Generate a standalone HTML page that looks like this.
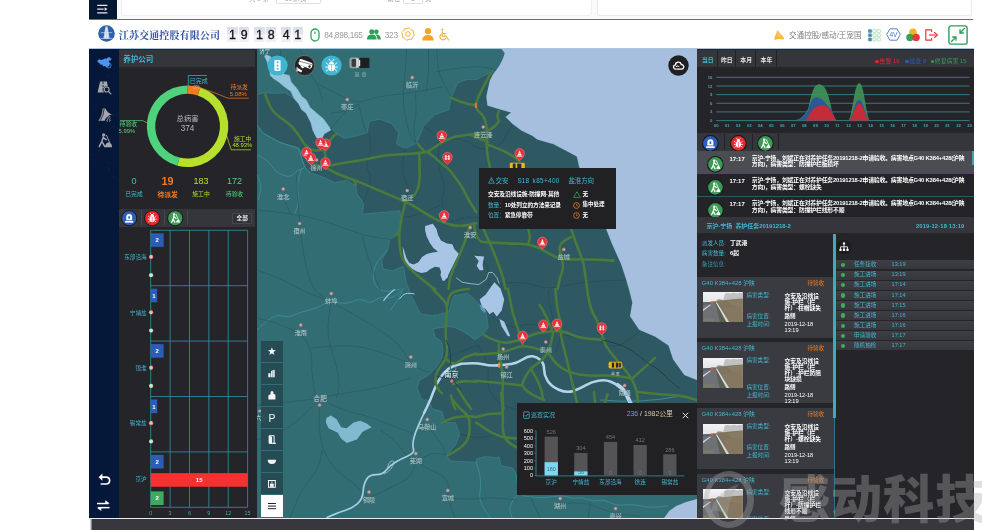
<!DOCTYPE html>
<html lang="zh-CN"><head><meta charset="utf-8"><title>江苏交通控股有限公司</title><style>
*{box-sizing:border-box;margin:0;padding:0}
html,body{width:982px;height:530px;overflow:hidden;background:#fff}
body{position:relative;font-family:"Liberation Sans","Noto Sans CJK SC",sans-serif;color:#fff;-webkit-font-smoothing:antialiased}
#root{position:absolute;left:0;top:0;width:982px;height:530px;overflow:hidden;background:#fff;filter:blur(.42px)}
.a{position:absolute}
.t{position:absolute;white-space:nowrap;line-height:1}
.c{color:#45b6cf}
svg{position:absolute;overflow:visible}
</style></head>
<body><div id="root">
<div class="a" style="left:116px;top:0;width:866px;height:19px;background:#fafafa"></div>
<div class="a" style="left:121px;top:-3px;width:471px;height:19px;background:#fff;border:1px solid #f0f0f0;border-radius:3px"></div>
<div class="a" style="left:597px;top:-3px;width:375px;height:19px;background:#fff;border:1px solid #e9e9e9;border-radius:3px"></div>
<div class="a" style="left:972px;top:0;width:10px;height:19px;background:#fff"></div>
<div class="a" style="left:276px;top:-10px;width:44.8px;height:13.6px;border:.8px solid #dcdfe6;border-radius:1.6px"></div>
<div class="a" style="left:402.6px;top:-10px;width:20.2px;height:13.6px;border:.8px solid #dcdfe6;border-radius:1.6px"></div>
<div class="t" style="left:249px;top:-4.4px;font-size:6.4px;color:#9a9ca2">共 9 条</div>
<div class="t" style="left:285px;top:-4.4px;font-size:6.4px;color:#9a9ca2">10条/页</div>
<div class="t" style="left:387.6px;top:-4.4px;font-size:6.4px;color:#9a9ca2">前往</div>
<div class="t" style="left:411px;top:-4.4px;font-size:6.4px;color:#9a9ca2">1</div>
<div class="t" style="left:425px;top:-4.4px;font-size:6.4px;color:#9a9ca2">页</div>
<div class="a" style="left:89px;top:0;width:27.6px;height:19.6px;background:#041733"></div>
<svg style="left:96px;top:3px" width="13" height="13" viewBox="0 0 13 13"><g stroke="#e8eaee" stroke-width="1.3" fill="none"><path d="M1.2 2.4H11.4M1.2 6.1H7.6M1.2 9.8H11.4"/></g><path d="M8.6 4.3L11.4 6.1L8.6 7.9Z" fill="#e8eaee"/></svg>
<div class="a" style="left:89px;top:18.7px;width:884px;height:1.1px;background:#6e6e6e"></div>
<svg style="left:98.2px;top:25.4px" width="17" height="17" viewBox="0 0 17 17"><circle cx="8.5" cy="8.5" r="8.3" fill="#2d62ab"/><path d="M7.4 1.6h2.2l2 12.2H5.4z" fill="#c3d4ea"/><path d="M8 3.4h1l.9 10.4H7.1z" fill="#eef3fa"/><path d="M8.5 5V13.8" stroke="#9fb9dc" stroke-width=".5"/><path d="M2.8 7.7H14.2" stroke="#e6eefa" stroke-width=".55"/><path d="M2.6 13.6Q8.5 12.8 14.4 13.6" stroke="#b8cbe6" stroke-width=".7" fill="none"/></svg>
<div class="t" style="left:118.8px;top:30.5px;font-family:'Liberation Serif','Noto Serif CJK SC',serif;font-weight:700;font-size:10px;letter-spacing:.12px;color:#2b4fa0">江苏交通控股有限公司</div>
<div class="a" style="left:227.3px;top:27.4px;width:10.4px;height:14.8px;background:linear-gradient(#d9dde8 0%,#e3e6ee 48%,#f6f6f8 52%,#eeeff3 100%);border-radius:1px;color:#151517;font-family:'Liberation Sans',sans-serif;font-weight:400;-webkit-text-stroke:.32px #151517;font-size:12.4px;line-height:16.3px;text-align:center">1</div>
<div class="a" style="left:239.0px;top:27.4px;width:10.4px;height:14.8px;background:linear-gradient(#d9dde8 0%,#e3e6ee 48%,#f6f6f8 52%,#eeeff3 100%);border-radius:1px;color:#151517;font-family:'Liberation Sans',sans-serif;font-weight:400;-webkit-text-stroke:.32px #151517;font-size:12.4px;line-height:16.3px;text-align:center">9</div>
<div class="a" style="left:254.2px;top:27.4px;width:10.4px;height:14.8px;background:linear-gradient(#d9dde8 0%,#e3e6ee 48%,#f6f6f8 52%,#eeeff3 100%);border-radius:1px;color:#151517;font-family:'Liberation Sans',sans-serif;font-weight:400;-webkit-text-stroke:.32px #151517;font-size:12.4px;line-height:16.3px;text-align:center">1</div>
<div class="a" style="left:265.9px;top:27.4px;width:10.4px;height:14.8px;background:linear-gradient(#d9dde8 0%,#e3e6ee 48%,#f6f6f8 52%,#eeeff3 100%);border-radius:1px;color:#151517;font-family:'Liberation Sans',sans-serif;font-weight:400;-webkit-text-stroke:.32px #151517;font-size:12.4px;line-height:16.3px;text-align:center">8</div>
<div class="a" style="left:281.1px;top:27.4px;width:10.4px;height:14.8px;background:linear-gradient(#d9dde8 0%,#e3e6ee 48%,#f6f6f8 52%,#eeeff3 100%);border-radius:1px;color:#151517;font-family:'Liberation Sans',sans-serif;font-weight:400;-webkit-text-stroke:.32px #151517;font-size:12.4px;line-height:16.3px;text-align:center">4</div>
<div class="a" style="left:292.6px;top:27.4px;width:10.4px;height:14.8px;background:linear-gradient(#d9dde8 0%,#e3e6ee 48%,#f6f6f8 52%,#eeeff3 100%);border-radius:1px;color:#151517;font-family:'Liberation Sans',sans-serif;font-weight:400;-webkit-text-stroke:.32px #151517;font-size:12.4px;line-height:16.3px;text-align:center">1</div>
<svg style="left:310px;top:28px" width="10" height="14" viewBox="0 0 10 14"><rect x="1" y="1" width="8" height="12" rx="4" fill="none" stroke="#2fa45c" stroke-width="1.3"/><path d="M5 3.4V6" stroke="#2fa45c" stroke-width="1.2"/></svg>
<div class="t" style="left:324.3px;top:30.6px;font-size:8.3px;letter-spacing:-.32px;color:#9c9c9c">84,898,165</div>
<svg style="left:366.5px;top:29px" width="14" height="11" viewBox="0 0 14 11"><g fill="#2c9f58"><circle cx="4.8" cy="2.8" r="2.5"/><path d="M0 10.4Q0 5.6 4.8 5.6Q9.6 5.6 9.6 10.4Z"/><circle cx="9.4" cy="2.8" r="2.3"/><path d="M8.2 5.3Q13.8 5.3 13.8 10.4H10.6Q10.4 6.8 8.2 5.3Z"/></g></svg>
<div class="t" style="left:384.8px;top:30.6px;font-size:8.3px;letter-spacing:-.3px;color:#9c9c9c">323</div>
<svg style="left:401.4px;top:27.3px" width="14" height="14" viewBox="0 0 14 14"><polygon points="13.28,8.25 11.49,10.00 10.56,12.32 8.05,12.30 5.75,13.28 4.00,11.49 1.68,10.56 1.70,8.05 0.72,5.75 2.51,4.00 3.44,1.68 5.95,1.70 8.25,0.72 10.00,2.51 12.32,3.44 12.30,5.95" fill="none" stroke="#f4b040" stroke-width="1" stroke-linejoin="round"/><circle cx="7" cy="7" r="2.3" fill="none" stroke="#f4b040" stroke-width="1"/></svg>
<svg style="left:421.6px;top:27.6px" width="12" height="13" viewBox="0 0 12 13"><g fill="#f3a621"><circle cx="6" cy="3.2" r="3.1"/><path d="M0.2 12.6Q0.2 7 6 7Q11.8 7 11.8 12.6Z"/></g></svg>
<svg style="left:439px;top:27.6px" width="11" height="13" viewBox="0 0 11 13"><g fill="none" stroke="#f4b040" stroke-width="1.2" stroke-linecap="round" stroke-linejoin="round"><circle cx="3.4" cy="1.6" r="1.1" fill="#f4b040" stroke="none"/><path d="M3.2 3.6V8.2H7.2L9.6 12"/><path d="M3.4 5.6H6.6"/><path d="M1.6 6.6Q0.6 8 1 9.6Q2 12.2 4.8 11.8Q6 11.4 6.6 10.4"/></g></svg>
<svg style="left:773.8px;top:29.6px" width="11" height="10.4" viewBox="0 0 11 10.4"><path d="M3.5 .3L10 7.8Q10.3 9.7 8.8 9.6Q5.2 8.2 .8 9.9Q-.1 8.8 .5 7.6Z" fill="#f6b93c"/><path d="M3.9 2.2L7.4 6.4M2.9 4.4L5.6 7.4" stroke="#fbe2a4" stroke-width=".6"/></svg>
<div class="t" style="left:789px;top:31.5px;font-size:7.6px;color:#808080;letter-spacing:0">交通控股/感动/王宠国</div>
<svg style="left:868px;top:28.6px" width="13" height="13" viewBox="0 0 13 13"><rect x="0.4" y="0.6" width="3.2" height="3" rx=".6" fill="#4a8fbb" stroke="#4a8fbb" stroke-width=".6"/><rect x="4.8" y="0.6" width="3.2" height="3" rx=".6" fill="none" stroke="#8fd09a" stroke-width=".6"/><rect x="9.2" y="0.6" width="3.2" height="3" rx=".6" fill="none" stroke="#8fd09a" stroke-width=".6"/><rect x="0.4" y="4.8" width="3.2" height="3" rx=".6" fill="#4a8fbb" stroke="#4a8fbb" stroke-width=".6"/><rect x="4.8" y="4.8" width="3.2" height="3" rx=".6" fill="none" stroke="#8fd09a" stroke-width=".6"/><rect x="9.2" y="4.8" width="3.2" height="3" rx=".6" fill="none" stroke="#8fd09a" stroke-width=".6"/><rect x="0.4" y="9.0" width="3.2" height="3" rx=".6" fill="#4a8fbb" stroke="#4a8fbb" stroke-width=".6"/><rect x="4.8" y="9.0" width="3.2" height="3" rx=".6" fill="none" stroke="#8fd09a" stroke-width=".6"/><rect x="9.2" y="9.0" width="3.2" height="3" rx=".6" fill="none" stroke="#8fd09a" stroke-width=".6"/></svg>
<svg style="left:886px;top:28.2px" width="15" height="13" viewBox="0 0 15 13"><polygon points="0.7,6.5 4,0.8 11,0.8 14.3,6.5 11,12.2 4,12.2" fill="#fff" stroke="#4a78bb" stroke-width=".9"/><text x="7.5" y="9" font-size="6.6" font-weight="400" text-anchor="middle" fill="#4a78bb" font-family="Liberation Sans,sans-serif">4V</text></svg>
<svg style="left:906px;top:27.6px" width="14" height="14" viewBox="0 0 14 14"><circle cx="7" cy="4.2" r="3.7" fill="#f5b324"/><circle cx="3.9" cy="9.4" r="3.7" fill="#34a356"/><circle cx="10.1" cy="9.4" r="3.7" fill="#e2393d"/></svg>
<svg style="left:924.6px;top:28.8px" width="13" height="12" viewBox="0 0 13 12"><g fill="none" stroke="#e0383c" stroke-width="1.2" stroke-linejoin="round"><path d="M6.6 3V0.8H0.8V11.2H6.6V9"/><path d="M4 6H10.6"/></g><path d="M9.2 3.2L12.4 6L9.2 8.8" fill="none" stroke="#e0383c" stroke-width="1.2"/></svg>
<svg style="left:948.4px;top:25px" width="20" height="20" viewBox="0 0 20 20"><rect x="0.9" y="0.9" width="18.2" height="18.2" rx="2.2" fill="#fff" stroke="#2c9f58" stroke-width="1.4"/><g stroke="#2c9f58" stroke-width="1.3" fill="none"><path d="M17 3L12.2 7.8M12 4.2V8H15.8"/><path d="M3 17L7.8 12.2M8 15.8V12H4.2"/></g></svg>
<div class="a" style="left:118.5px;top:48.6px;width:136.5px;height:469.6px;background:#252529"></div>
<div class="a" style="left:118.5px;top:50.4px;width:136.5px;height:16.2px;background:#34363c"></div>
<div class="t" style="left:123.2px;top:56.2px;font-size:7.5px;font-weight:700;color:#45b6cf">养护公司</div>
<svg style="left:0;top:0" width="982" height="530" viewBox="0 0 982 530"><path d="M187.60 85.40A40.80 40.80 0 0 1 200.40 87.46L197.77 95.44A32.40 32.40 0 0 0 187.60 93.80Z" fill="#f47a20"/><path d="M200.40 87.46A40.80 40.80 0 0 1 177.43 165.71L179.52 157.58A32.40 32.40 0 0 0 197.77 95.44Z" fill="#b7e02d"/><path d="M177.43 165.71A40.80 40.80 0 0 1 187.60 85.40L187.60 93.80A32.40 32.40 0 0 0 179.52 157.58Z" fill="#4ed37c"/><path d="M188.3 86.4V75.5H207" fill="none" stroke="#45b6cf" stroke-width=".7"/><path d="M199.6 87.6L214 92.6L228 98.2H248.8" fill="none" stroke="#f47a20" stroke-width=".7"/><path d="M226.8 136L231.2 149.8H251" fill="none" stroke="#b7e02d" stroke-width=".7"/><path d="M147.4 123L142.6 120.6H120" fill="none" stroke="#4ed37c" stroke-width=".7"/></svg>
<div class="t" style="left:189.8px;top:77.8px;font-size:6px;color:#45b6cf">已完成</div>
<div class="t" style="left:193.2px;top:85.6px;font-size:4.8px;color:#e8b890">0%</div>
<div class="t" style="left:230.4px;top:84.6px;font-size:5.8px;color:#f47a20">待派发</div>
<div class="t" style="left:229.8px;top:91.4px;font-size:6px;color:#f47a20">5.08%</div>
<div class="t" style="left:234px;top:136.6px;font-size:5.8px;color:#b7e02d">施工中</div>
<div class="t" style="left:232.4px;top:143.4px;font-size:5.8px;color:#b7e02d">48.93%</div>
<div class="t" style="left:119.6px;top:121.5px;font-size:5.8px;color:#4ed37c">待验收</div>
<div class="t" style="left:115.4px;top:128.9px;font-size:5.8px;color:#4ed37c">45.99%</div>
<div class="t" style="left:167.6px;top:114.6px;width:40px;text-align:center;font-size:7.4px;color:#b9b9bb">总病害</div>
<div class="t" style="left:167.6px;top:124.6px;width:40px;text-align:center;font-size:8.2px;color:#b9b9bb">374</div>
<div class="t" style="left:114.0px;top:176.9px;width:40px;text-align:center;font-size:9.0px;font-weight:400;color:#45b6cf">0</div>
<div class="t" style="left:114.0px;top:191.6px;width:40px;text-align:center;font-size:5.8px;font-weight:400;color:#45b6cf">已完成</div>
<div class="t" style="left:147.6px;top:176.0px;width:40px;text-align:center;font-size:10.8px;font-weight:700;color:#f47a20">19</div>
<div class="t" style="left:147.6px;top:192.4px;width:40px;text-align:center;font-size:6.8px;font-weight:700;color:#f47a20">待派发</div>
<div class="t" style="left:181.0px;top:176.9px;width:40px;text-align:center;font-size:9.0px;font-weight:400;color:#b7e02d">183</div>
<div class="t" style="left:181.0px;top:191.6px;width:40px;text-align:center;font-size:5.8px;font-weight:400;color:#b7e02d">施工中</div>
<div class="t" style="left:214.4px;top:176.9px;width:40px;text-align:center;font-size:9.0px;font-weight:400;color:#4ed37c">172</div>
<div class="t" style="left:214.4px;top:191.6px;width:40px;text-align:center;font-size:5.8px;font-weight:400;color:#4ed37c">待验收</div>
<div class="a" style="left:118.5px;top:209px;width:136.5px;height:17.6px;background:#34363c"></div>
<div class="a" style="left:141.2px;top:210.4px;width:1px;height:15px;background:#46484e"></div>
<div class="a" style="left:164.2px;top:210.4px;width:1px;height:15px;background:#46484e"></div>
<div class="a" style="left:187.2px;top:210.4px;width:1px;height:15px;background:#46484e"></div>
<svg style="left:120.7px;top:210.4px" width="16.4" height="16.4" viewBox="-10 -10 20 20"><circle r="9.3" fill="#2c5fb8" stroke="#141618" stroke-width="1.2"/><path d="M-3.6 2.6V-1.2Q-3.6 -5 0 -5Q3.6 -5 3.6 -1.2V2.6Z" fill="#fff"/><rect x="-5" y="3.4" width="10" height="2" fill="#fff"/><rect x="-1" y="-2.4" width="2" height="3" fill="#2c5fb8"/></svg>
<svg style="left:143.8px;top:210.4px" width="16.4" height="16.4" viewBox="-10 -10 20 20"><circle r="9.3" fill="#e8262d" stroke="#141618" stroke-width="1.2"/><ellipse cx="0" cy="1" rx="3.1" ry="4" fill="#fff"/><circle cx="0" cy="-3.6" r="1.9" fill="#fff"/><g stroke="#fff" stroke-width="1" fill="none"><path d="M-3 -1L-5 -2.6M-3.2 1.2H-5.4M-3 3.2L-4.8 4.8M3 -1L5 -2.6M3.2 1.2H5.4M3 3.2L4.8 4.8M-1.4 -5L-2.4 -6.2M1.4 -5L2.4 -6.2"/></g><path d="M0 -1.8V4.6" stroke="#e8262d" stroke-width=".7"/></svg>
<svg style="left:166.7px;top:210.4px" width="16.4" height="16.4" viewBox="-10 -10 20 20"><circle r="9.3" fill="#3c9a55" stroke="#141618" stroke-width="1.2"/><circle cx="-1.4" cy="-4.4" r="1.5" fill="#fff"/><g stroke="#fff" stroke-width="1.5" fill="none" stroke-linecap="round" stroke-linejoin="round"><path d="M-1.6 -2.4L-2.6 1.2L-4.4 5M-2.6 1.2L-0.4 5M-1.6 -2L1 0.2"/><path d="M1.2 -4.4L4.6 3.6" stroke-width="1"/></g><path d="M1 5.4Q1.4 1.6 4 1.8Q6 2.4 5.8 5.4Z" fill="#fff"/></svg>
<div class="a" style="left:232px;top:213.4px;width:20.4px;height:10.4px;background:#303238;border:.6px solid #45474d"></div>
<div class="t" style="left:232px;top:215.6px;width:20.4px;text-align:center;font-size:5.6px;font-weight:700;color:#eee">全部</div>
<svg style="left:0;top:0" width="982" height="530" viewBox="0 0 982 530"><path d="M150.70 230.30V507.30" stroke="#2f94a4" stroke-width=".8"/><path d="M170.08 230.30V507.30" stroke="#2f94a4" stroke-width=".8"/><path d="M189.46 230.30V507.30" stroke="#2f94a4" stroke-width=".8"/><path d="M208.84 230.30V507.30" stroke="#2f94a4" stroke-width=".8"/><path d="M228.22 230.30V507.30" stroke="#2f94a4" stroke-width=".8"/><path d="M247.60 230.30V507.30" stroke="#2f94a4" stroke-width=".8"/><path d="M150.70 230.30H247.60" stroke="#2f94a4" stroke-width=".8"/><path d="M150.70 285.70H247.60" stroke="#2f94a4" stroke-width=".8"/><path d="M150.70 341.10H247.60" stroke="#2f94a4" stroke-width=".8"/><path d="M150.70 396.50H247.60" stroke="#2f94a4" stroke-width=".8"/><path d="M150.70 451.90H247.60" stroke="#2f94a4" stroke-width=".8"/><path d="M150.70 507.30H247.60" stroke="#2f94a4" stroke-width=".8"/><rect x="150.70" y="233.30" width="12.92" height="13.6" fill="#2c5db6"/><text x="157.16" y="242.30" font-size="6" font-weight="700" fill="#fff" text-anchor="middle" font-family="Liberation Sans,sans-serif">2</text><circle cx="151.10" cy="256.95" r="2.15" fill="#e98a8a"/><text x="151.10" y="258.25" font-size="3.6" fill="#fff" text-anchor="middle" font-family="Liberation Sans,sans-serif">0</text><circle cx="151.10" cy="275.20" r="2.15" fill="#a8d8b8"/><text x="151.10" y="276.50" font-size="3.6" fill="#fff" text-anchor="middle" font-family="Liberation Sans,sans-serif">0</text><rect x="150.70" y="288.70" width="6.46" height="13.6" fill="#2c5db6"/><text x="153.93" y="297.70" font-size="6" font-weight="700" fill="#fff" text-anchor="middle" font-family="Liberation Sans,sans-serif">1</text><circle cx="151.10" cy="312.35" r="2.15" fill="#e98a8a"/><text x="151.10" y="313.65" font-size="3.6" fill="#fff" text-anchor="middle" font-family="Liberation Sans,sans-serif">0</text><circle cx="151.10" cy="330.60" r="2.15" fill="#a8d8b8"/><text x="151.10" y="331.90" font-size="3.6" fill="#fff" text-anchor="middle" font-family="Liberation Sans,sans-serif">0</text><rect x="150.70" y="344.10" width="12.92" height="13.6" fill="#2c5db6"/><text x="157.16" y="353.10" font-size="6" font-weight="700" fill="#fff" text-anchor="middle" font-family="Liberation Sans,sans-serif">2</text><circle cx="151.10" cy="367.75" r="2.15" fill="#e98a8a"/><text x="151.10" y="369.05" font-size="3.6" fill="#fff" text-anchor="middle" font-family="Liberation Sans,sans-serif">0</text><circle cx="151.10" cy="386.00" r="2.15" fill="#a8d8b8"/><text x="151.10" y="387.30" font-size="3.6" fill="#fff" text-anchor="middle" font-family="Liberation Sans,sans-serif">0</text><rect x="150.70" y="399.50" width="6.46" height="13.6" fill="#2c5db6"/><text x="153.93" y="408.50" font-size="6" font-weight="700" fill="#fff" text-anchor="middle" font-family="Liberation Sans,sans-serif">1</text><circle cx="151.10" cy="423.15" r="2.15" fill="#e98a8a"/><text x="151.10" y="424.45" font-size="3.6" fill="#fff" text-anchor="middle" font-family="Liberation Sans,sans-serif">0</text><circle cx="151.10" cy="441.40" r="2.15" fill="#a8d8b8"/><text x="151.10" y="442.70" font-size="3.6" fill="#fff" text-anchor="middle" font-family="Liberation Sans,sans-serif">0</text><rect x="150.70" y="454.90" width="12.92" height="13.6" fill="#2c5db6"/><text x="157.16" y="463.90" font-size="6" font-weight="700" fill="#fff" text-anchor="middle" font-family="Liberation Sans,sans-serif">2</text><rect x="150.70" y="473.15" width="96.90" height="13.6" fill="#f8302f"/><text x="199.15" y="482.15" font-size="6" font-weight="700" fill="#fff" text-anchor="middle" font-family="Liberation Sans,sans-serif">15</text><rect x="150.70" y="491.40" width="12.92" height="13.6" fill="#3fa95f"/><text x="157.16" y="500.40" font-size="6" font-weight="700" fill="#fff" text-anchor="middle" font-family="Liberation Sans,sans-serif">2</text><text x="150.70" y="515.4" font-size="5.4" fill="#3ea7bb" text-anchor="middle" font-family="Liberation Sans,sans-serif">0</text><text x="170.08" y="515.4" font-size="5.4" fill="#3ea7bb" text-anchor="middle" font-family="Liberation Sans,sans-serif">3</text><text x="189.46" y="515.4" font-size="5.4" fill="#3ea7bb" text-anchor="middle" font-family="Liberation Sans,sans-serif">6</text><text x="208.84" y="515.4" font-size="5.4" fill="#3ea7bb" text-anchor="middle" font-family="Liberation Sans,sans-serif">9</text><text x="228.22" y="515.4" font-size="5.4" fill="#3ea7bb" text-anchor="middle" font-family="Liberation Sans,sans-serif">12</text><text x="247.60" y="515.4" font-size="5.4" fill="#3ea7bb" text-anchor="middle" font-family="Liberation Sans,sans-serif">15</text></svg>
<div class="t" style="left:108px;top:255.3px;width:38.6px;text-align:right;font-size:5.6px;color:#45b6cf">东部沿海</div>
<div class="t" style="left:108px;top:310.6px;width:38.6px;text-align:right;font-size:5.6px;color:#45b6cf">宁靖盐</div>
<div class="t" style="left:108px;top:366.1px;width:38.6px;text-align:right;font-size:5.6px;color:#45b6cf">锦淮</div>
<div class="t" style="left:108px;top:421.4px;width:38.6px;text-align:right;font-size:5.6px;color:#45b6cf">锡常盐</div>
<div class="t" style="left:108px;top:476.8px;width:38.6px;text-align:right;font-size:5.6px;color:#45b6cf">京沪</div>
<div class="a" style="left:89px;top:48.6px;width:29.6px;height:469.6px;background:#06183a"></div>
<svg style="left:89px;top:48.6px" width="30" height="140"><circle cx="8.2" cy="74.4" r=".35" fill="#2a4468"/><circle cx="11.6" cy="81.7" r=".35" fill="#2a4468"/><circle cx="18.3" cy="16.0" r=".35" fill="#2a4468"/><circle cx="2.3" cy="110.2" r=".35" fill="#2a4468"/><circle cx="8.7" cy="36.6" r=".35" fill="#2a4468"/><circle cx="27.9" cy="65.4" r=".35" fill="#2a4468"/><circle cx="23.7" cy="66.1" r=".35" fill="#2a4468"/><circle cx="18.6" cy="26.4" r=".35" fill="#2a4468"/><circle cx="18.5" cy="113.9" r=".35" fill="#2a4468"/><circle cx="15.6" cy="98.4" r=".35" fill="#2a4468"/><circle cx="19.5" cy="15.8" r=".35" fill="#2a4468"/><circle cx="21.7" cy="80.1" r=".35" fill="#2a4468"/><circle cx="9.8" cy="11.8" r=".35" fill="#2a4468"/><circle cx="24.5" cy="65.7" r=".35" fill="#2a4468"/><circle cx="20.7" cy="115.2" r=".35" fill="#2a4468"/><circle cx="20.6" cy="120.4" r=".35" fill="#2a4468"/><circle cx="12.3" cy="105.7" r=".35" fill="#2a4468"/><circle cx="13.6" cy="122.1" r=".35" fill="#2a4468"/><circle cx="24.9" cy="19.9" r=".35" fill="#2a4468"/><circle cx="5.5" cy="34.5" r=".35" fill="#2a4468"/><circle cx="27.1" cy="61.2" r=".35" fill="#2a4468"/><circle cx="18.3" cy="44.7" r=".35" fill="#2a4468"/><circle cx="15.2" cy="55.1" r=".35" fill="#2a4468"/><circle cx="11.1" cy="79.4" r=".35" fill="#2a4468"/><circle cx="17.2" cy="118.3" r=".35" fill="#2a4468"/><circle cx="19.7" cy="121.3" r=".35" fill="#2a4468"/><circle cx="24.3" cy="128.9" r=".35" fill="#2a4468"/><circle cx="19.5" cy="27.9" r=".35" fill="#2a4468"/><circle cx="24.4" cy="125.7" r=".35" fill="#2a4468"/><circle cx="25.5" cy="77.4" r=".35" fill="#2a4468"/><circle cx="20.6" cy="33.8" r=".35" fill="#2a4468"/><circle cx="23.6" cy="78.0" r=".35" fill="#2a4468"/><circle cx="9.4" cy="15.7" r=".35" fill="#2a4468"/><circle cx="24.2" cy="128.8" r=".35" fill="#2a4468"/><circle cx="4.3" cy="105.7" r=".35" fill="#2a4468"/><circle cx="12.7" cy="26.4" r=".35" fill="#2a4468"/><circle cx="9.6" cy="101.8" r=".35" fill="#2a4468"/><circle cx="24.7" cy="13.4" r=".35" fill="#2a4468"/><circle cx="18.0" cy="13.5" r=".35" fill="#2a4468"/><circle cx="20.7" cy="48.4" r=".35" fill="#2a4468"/><circle cx="24.9" cy="127.6" r=".35" fill="#2a4468"/><circle cx="15.1" cy="129.8" r=".35" fill="#2a4468"/><circle cx="10.1" cy="17.4" r=".35" fill="#2a4468"/><circle cx="17.6" cy="11.8" r=".35" fill="#2a4468"/><circle cx="7.1" cy="57.8" r=".35" fill="#2a4468"/><circle cx="17.9" cy="27.1" r=".35" fill="#2a4468"/><circle cx="3.1" cy="113.9" r=".35" fill="#2a4468"/><circle cx="10.2" cy="125.0" r=".35" fill="#2a4468"/><circle cx="25.3" cy="54.1" r=".35" fill="#2a4468"/><circle cx="14.0" cy="71.4" r=".35" fill="#2a4468"/></svg>
<svg style="left:97px;top:57px" width="15" height="11.4" viewBox="0 0 16 12"><path d="M0.4 3.6L2.6 2.2L4 3.2L6.6 2.6L8.2 1.4L10.4 1.8L11.4 0.4L13.6 0.2L14.2 1.6L15.6 1.2L15 3L13 3.8L12.4 5.2L13.8 6.2L13.4 8.4L11.6 10.2L9.6 10.6L8.4 9.6L6.4 9.8L5.8 8.2L3.4 7.8L2.4 6.2L0.8 5.6Z" fill="#4b95ec"/><circle cx="12.4" cy="9" r="2.7" fill="none" stroke="#4b95ec" stroke-width=".8"/><path d="M10.6 8.4H14.2M12.4 6.6V11.4" stroke="#4b95ec" stroke-width=".5"/></svg>
<svg style="left:97.4px;top:81.4px" width="14.6" height="13.6" viewBox="0 0 16 15"><path d="M3.4 0.6H10.8L12 6Q8.2 5 7 8.4Q6.6 10.8 8 12.6H0.6Z" fill="#a3a7ad"/><path d="M6.6 1V12.4" stroke="#051a36" stroke-width="1.1" stroke-dasharray="2.2 1.4"/><circle cx="10.6" cy="9.4" r="2.7" fill="none" stroke="#a3a7ad" stroke-width="1.2"/><path d="M12.6 11.4L15.2 14.2" stroke="#a3a7ad" stroke-width="1.4" stroke-linecap="round"/></svg>
<svg style="left:97.6px;top:108px" width="14.4" height="13.4" viewBox="0 0 16 15"><path d="M0.4 14.2Q4.4 9.6 5.2 0.6H8.2Q11 6 15.4 7.2Q9.4 8 7.4 14.2Z" fill="#a3a7ad"/><path d="M2.6 14Q6 9 6.8 1" stroke="#051a36" stroke-width=".9" fill="none"/><text x="12" y="14.2" font-size="6" fill="#a3a7ad" text-anchor="middle" font-family="Liberation Sans,Noto Sans CJK SC,sans-serif">养</text></svg>
<svg style="left:97.6px;top:133.2px" width="15" height="15" viewBox="0 0 17 17"><circle cx="6.4" cy="2.2" r="1.8" fill="#a3a7ad"/><g stroke="#a3a7ad" stroke-width="1.7" fill="none" stroke-linecap="round" stroke-linejoin="round"><path d="M6 4.6L4.4 9.4L1.4 15.4M4.4 9.4L7.6 15.2M6 5.2L9.2 7.6"/><path d="M9.6 2.6L13.4 11.4" stroke-width="1.1"/></g><path d="M7.8 16.2Q8.4 10.4 12.6 10.8Q16.2 11.8 15.8 16.2Z" fill="#a3a7ad"/></svg>
<svg style="left:97.6px;top:473.4px" width="13" height="13" viewBox="0 0 13 13"><path d="M2.2 4.2H8Q11.6 4.2 11.6 7.6Q11.6 11 8 11H2.6" fill="none" stroke="#fff" stroke-width="1.7"/><path d="M4.4 0.6L0.6 4.2L4.4 7.8Z" fill="#fff"/></svg>
<svg style="left:95.9px;top:500.2px" width="14.6" height="11.2" viewBox="0 0 15 12"><g stroke="#fff" stroke-width="1.6" fill="none"><path d="M0.8 3.8H13"/><path d="M14.2 8.2H2"/></g><path d="M9.6 0.2L14.4 3.8H9.6Z" fill="#fff"/><path d="M5.4 11.8L0.6 8.2H5.4Z" fill="#fff"/></svg>
<svg style="left:256.8px;top:49px;overflow:hidden" width="440.6" height="469.2" viewBox="256.8 49 440.6 469.2"><rect x="256" y="49" width="442" height="469" fill="#326d74"/><polygon points="257.0,125.3 257.0,94.7 265.0,92.4 276.4,93.6 284.3,92.4 292.0,97.0 310.0,115.0 330.7,128.0 336.4,133.9 344.3,138.4 355.6,136.1 366.9,132.7 369.2,121.4 379.4,119.2 391.8,123.7 398.6,132.7 396.3,144.1 405.4,148.6 416.7,142.9 423.5,126.0 434.8,114.6 448.4,110.1 450.7,97.7 457.5,83.0 466.5,79.6 476.0,79.6 489.6,72.8 496.0,71.6 493.0,73.9 489.6,80.7 486.2,96.5 487.3,105.6 498.6,109.0 511.0,112.4 505.4,116.9 512.2,123.7 521.3,130.5 532.6,136.1 537.1,139.5 553.0,144.0 566.5,150.9 576.7,156.5 579.0,166.7 585.0,180.0 592.0,195.0 598.0,210.0 603.0,222.0 606.0,229.0 611.8,243.7 620.9,264.0 625.4,277.6 628.8,289.0 632.2,302.6 629.9,316.2 639.0,329.7 654.8,336.5 668.4,345.6 672.9,359.2 684.2,375.0 697.0,380.0 697.0,482.0 516.7,482.0 516.7,474.7 512.2,467.9 500.9,465.6 498.6,456.6 496.4,457.7 485.0,456.6 476.0,458.8 476.0,462.2 450.7,461.1 446.1,455.5 455.2,445.3 459.7,434.0 455.2,422.6 445.0,422.6 441.6,411.3 432.5,409.0 428.0,400.0 423.0,400.0 420.5,397.6 416.9,387.8 419.3,380.4 427.9,375.5 435.3,368.2 441.4,359.6 442.6,351.0 441.4,341.2 435.3,337.5 432.8,328.9 440.2,327.7 448.8,326.4 454.9,327.7 462.3,331.3 468.4,335.0 474.5,339.9 481.9,335.0 488.0,327.7 486.8,319.1 485.6,311.7 481.9,306.8 477.0,301.9 472.1,297.0 467.2,293.3 453.7,295.8 451.2,301.9 448.8,311.7 445.1,312.9 432.8,315.4 420.5,314.2 416.9,306.8 410.7,294.5 405.8,282.3 404.4,272.0 403.1,266.3 391.8,270.9 382.8,268.6 381.6,259.5 387.3,250.5 389.5,239.2 397.5,234.6 400.9,218.8 399.7,210.9 387.3,212.0 373.7,213.1 362.4,214.3 363.5,203.0 356.7,193.9 355.6,186.0 346.5,180.3 335.2,182.6 323.9,177.5 310.3,172.8 304.7,168.3 301.3,157.0 299.0,147.9 290.0,145.6 278.6,142.2 269.6,136.6 262.8,133.2" fill="#2e5963" stroke="#3c8d98" stroke-width=".5" stroke-linejoin="round"/><path d="M369.0 133.0Q372.0 150.0 368.5 157.5Q365.0 165.0 368.5 171.5Q372.0 178.0 367.5 190.5L363.0 203.0" fill="none" stroke="#214a53" stroke-width=".6"/><path d="M405.0 148.0Q400.0 170.0 405.0 180.0Q410.0 190.0 405.0 200.5L400.0 211.0" fill="none" stroke="#214a53" stroke-width=".6"/><path d="M423.0 126.0Q440.0 140.0 451.0 139.0Q462.0 138.0 471.0 144.0Q480.0 150.0 490.0 149.0Q500.0 148.0 506.0 136.0L512.0 124.0" fill="none" stroke="#214a53" stroke-width=".6"/><path d="M440.0 140.0Q436.0 165.0 441.0 175.0Q446.0 185.0 443.0 195.0Q440.0 205.0 446.0 213.5L452.0 222.0" fill="none" stroke="#214a53" stroke-width=".6"/><path d="M400.0 218.0Q420.0 215.0 430.0 210.0L440.0 205.0" fill="none" stroke="#214a53" stroke-width=".6"/><path d="M452.0 222.0Q470.0 215.0 481.0 217.5Q492.0 220.0 502.0 214.0Q512.0 208.0 526.0 211.0Q540.0 214.0 550.0 207.0Q560.0 200.0 571.5 188.0L583.0 176.0" fill="none" stroke="#214a53" stroke-width=".6"/><path d="M470.0 250.0Q490.0 262.0 488.0 273.5Q486.0 285.0 493.0 292.5Q500.0 300.0 496.5 309.0L493.0 318.0" fill="none" stroke="#214a53" stroke-width=".6"/><path d="M486.0 285.0Q520.0 280.0 534.0 285.0Q548.0 290.0 564.0 286.0Q580.0 282.0 603.0 281.0L626.0 280.0" fill="none" stroke="#214a53" stroke-width=".6"/><path d="M548.0 290.0Q550.0 315.0 556.0 325.0Q562.0 335.0 559.0 343.5L556.0 352.0" fill="none" stroke="#214a53" stroke-width=".6"/><path d="M562.0 335.0Q595.0 338.0 605.0 344.0Q615.0 350.0 627.5 340.5L640.0 331.0" fill="none" stroke="#214a53" stroke-width=".6"/><path d="M493.0 318.0Q510.0 330.0 520.0 326.0Q530.0 322.0 539.0 326.0L548.0 330.0" fill="none" stroke="#214a53" stroke-width=".6"/><path d="M459.0 434.0Q480.0 440.0 490.0 436.0Q500.0 432.0 508.5 438.5L517.0 445.0" fill="none" stroke="#214a53" stroke-width=".6"/><path d="M478.0 345.0Q490.0 365.0 488.0 376.5Q486.0 388.0 493.0 396.5Q500.0 405.0 508.5 407.5L517.0 410.0" fill="none" stroke="#214a53" stroke-width=".6"/><path d="M441.0 360.0Q460.0 352.0 469.0 348.5L478.0 345.0" fill="none" stroke="#214a53" stroke-width=".6"/><polygon points="500.5,48.0 504.5,53.0 503.0,58.0 499.0,66.0 495.0,71.6 493.0,73.9 489.6,80.7 486.2,96.5 487.3,105.6 498.6,109.0 511.0,112.4 505.4,116.9 512.2,123.7 521.3,130.5 532.6,136.1 537.1,139.5 553.0,144.0 566.5,150.9 576.7,156.5 579.0,166.7 585.0,180.0 592.0,195.0 598.0,210.0 603.0,222.0 606.0,229.0 611.8,243.7 620.9,264.0 625.4,277.6 628.8,289.0 632.2,302.6 629.9,316.2 639.0,329.7 654.8,336.5 668.4,345.6 672.9,359.2 684.2,375.0 697.0,380.0 698.0,380.0 698.0,48.0" fill="#a6bfde"/><polygon points="664,518 669,511 676,506 686,502 698,498.6 698,518" fill="#a6bfde"/><path d="M516.7 474.7Q517.0 495.0 523.5 496.0Q530.0 497.0 537.5 497.5Q545.0 498.0 553.5 496.5Q562.0 495.0 567.5 497.0Q573.0 499.0 577.5 498.0Q582.0 497.0 588.0 499.5Q594.0 502.0 598.5 500.5Q603.0 499.0 609.5 502.5Q616.0 506.0 625.0 505.0Q634.0 504.0 641.0 506.0Q648.0 508.0 658.0 507.0L668.0 506.0" fill="none" stroke="#44a9b8" stroke-width=".55" opacity=".85"/><path d="M476.0 462.0Q482.0 480.0 480.0 490.0Q478.0 500.0 484.0 509.0L490.0 518.0" fill="none" stroke="#44a9b8" stroke-width=".55" opacity=".85"/><path d="M517.0 495.0Q508.0 505.0 510.0 511.5L512.0 518.0" fill="none" stroke="#44a9b8" stroke-width=".55" opacity=".85"/><path d="M257.0 125.0Q262.0 133.0 266.0 135.0Q270.0 137.0 274.5 139.5Q279.0 142.0 284.5 144.0Q290.0 146.0 294.5 147.0Q299.0 148.0 300.0 152.5Q301.0 157.0 303.0 162.5Q305.0 168.0 307.5 170.5L310.0 173.0" fill="none" stroke="#44a9b8" stroke-width=".55" opacity=".85"/><path d="M257.0 155.0Q268.0 160.0 271.5 166.0Q275.0 172.0 282.5 175.0Q290.0 178.0 293.5 174.0Q297.0 170.0 300.5 169.0L304.0 168.0" fill="none" stroke="#44a9b8" stroke-width=".55" opacity=".85"/><path d="M257.0 175.0Q262.0 185.0 260.0 192.5L258.0 200.0" fill="none" stroke="#44a9b8" stroke-width=".55" opacity=".85"/><path d="M301.0 169.0Q296.0 185.0 298.0 192.5Q300.0 200.0 297.0 207.5L294.0 215.0" fill="none" stroke="#44a9b8" stroke-width=".55" opacity=".85"/><path d="M387.0 250.0Q375.0 262.0 373.5 271.0Q372.0 280.0 376.0 286.0Q380.0 292.0 387.5 291.0Q395.0 290.0 399.0 289.5L403.0 289.0" fill="none" stroke="#44a9b8" stroke-width=".55" opacity=".85"/><path d="M403.0 289.0Q392.0 300.0 386.0 298.0Q380.0 296.0 375.0 300.0Q370.0 304.0 365.0 301.0Q360.0 298.0 352.5 301.5Q345.0 305.0 337.5 302.5Q330.0 300.0 324.0 304.0Q318.0 308.0 309.0 310.0Q300.0 312.0 294.0 315.0Q288.0 318.0 282.0 316.0Q276.0 314.0 269.0 319.5Q262.0 325.0 259.5 327.5L257.0 330.0" fill="none" stroke="#44a9b8" stroke-width=".55" opacity=".85"/><path d="M403.0 289.0Q398.0 300.0 394.0 305.0L390.0 310.0" fill="none" stroke="#44a9b8" stroke-width=".55" opacity=".85"/><path d="M257.0 210.0Q290.0 213.0 310.0 217.5Q330.0 222.0 346.0 229.0Q362.0 236.0 379.5 238.0L397.0 240.0" fill="none" stroke="#29595f" stroke-width=".7"/><path d="M296.0 175.0Q298.0 200.0 299.0 215.0Q300.0 230.0 302.0 245.0Q304.0 260.0 308.0 275.0Q312.0 290.0 321.5 296.0L331.0 302.0" fill="none" stroke="#29595f" stroke-width=".7"/><path d="M283.0 198.0L290.0 213.0" fill="none" stroke="#29595f" stroke-width=".7"/><path d="M406.4 49.0Q405.5 67.9 404.1 82.1Q402.6 96.2 403.6 105.6Q404.5 115.0 406.9 124.5Q409.2 133.9 412.0 138.6L414.9 143.3" fill="none" stroke="#29595f" stroke-width=".7"/><path d="M428.1 49.0Q429.1 67.9 427.6 79.2L426.2 90.5" fill="none" stroke="#29595f" stroke-width=".7"/><path d="M436.6 49.0Q437.5 69.8 440.4 76.4Q443.2 83.0 447.0 89.6L450.8 96.2" fill="none" stroke="#29595f" stroke-width=".7"/><path d="M318.0 84.0Q330.0 90.5 335.6 93.3Q341.3 96.2 349.8 100.0Q358.3 103.7 367.8 100.0Q377.2 96.2 389.4 95.2Q401.7 94.3 414.9 91.9Q428.1 89.6 435.6 88.2L443.2 86.7" fill="none" stroke="#29595f" stroke-width=".7"/><path d="M435.7 71.6Q458.3 67.9 469.6 67.0Q480.9 66.0 488.4 67.9L496.0 69.8" fill="none" stroke="#29595f" stroke-width=".7"/><path d="M330.0 113.2Q348.9 111.3 353.6 107.5L358.3 103.7" fill="none" stroke="#29595f" stroke-width=".7"/><path d="M414.9 92.4Q416.8 111.3 414.9 119.8Q413.0 128.2 414.4 135.8L415.8 143.3" fill="none" stroke="#29595f" stroke-width=".7"/><path d="M347.0 110.0Q336.0 122.0 333.0 126.0L330.0 130.0" fill="none" stroke="#29595f" stroke-width=".7"/><path d="M300.0 49.0Q304.0 66.0 311.0 75.0Q318.0 84.0 320.0 92.0L322.0 100.0" fill="none" stroke="#29595f" stroke-width=".7"/><path d="M358.3 103.7Q362.0 120.0 364.0 126.0L366.0 132.0" fill="none" stroke="#29595f" stroke-width=".7"/><path d="M257.0 270.0Q280.0 278.0 290.0 284.0Q300.0 290.0 315.5 296.0L331.0 302.0" fill="none" stroke="#29595f" stroke-width=".7"/><path d="M331.0 302.0Q350.0 312.0 365.0 321.0Q380.0 330.0 390.0 337.5Q400.0 345.0 405.0 354.0L410.0 363.0" fill="none" stroke="#29595f" stroke-width=".7"/><path d="M331.0 302.0Q325.0 330.0 330.0 345.0Q335.0 360.0 337.5 372.5Q340.0 385.0 338.0 391.5L336.0 398.0" fill="none" stroke="#29595f" stroke-width=".7"/><path d="M301.0 334.0Q312.0 348.0 311.5 359.0Q311.0 370.0 313.0 382.5L315.0 395.0" fill="none" stroke="#29595f" stroke-width=".7"/><path d="M311.0 348.0Q340.0 345.0 352.5 346.0Q365.0 347.0 377.5 351.5Q390.0 356.0 400.0 359.5L410.0 363.0" fill="none" stroke="#29595f" stroke-width=".7"/><path d="M257.0 318.0Q275.0 322.0 288.0 328.0L301.0 334.0" fill="none" stroke="#29595f" stroke-width=".7"/><path d="M257.0 405.0Q290.0 402.0 305.0 400.0Q320.0 398.0 335.0 395.0Q350.0 392.0 365.0 390.0Q380.0 388.0 395.0 383.0L410.0 378.0" fill="none" stroke="#29595f" stroke-width=".7"/><path d="M320.0 398.0Q318.0 420.0 320.0 435.0Q322.0 450.0 328.5 460.0Q335.0 470.0 343.5 476.0Q352.0 482.0 360.5 490.0L369.0 498.0" fill="none" stroke="#29595f" stroke-width=".7"/><path d="M320.0 398.0Q340.0 410.0 352.5 412.5Q365.0 415.0 377.5 420.0Q390.0 425.0 402.0 429.5L414.0 434.0" fill="none" stroke="#29595f" stroke-width=".7"/><path d="M257.0 440.0Q280.0 432.0 290.0 426.0Q300.0 420.0 310.0 409.0L320.0 398.0" fill="none" stroke="#29595f" stroke-width=".7"/><path d="M290.0 518.0Q300.0 490.0 309.0 480.0Q318.0 470.0 320.0 460.0L322.0 450.0" fill="none" stroke="#29595f" stroke-width=".7"/><path d="M369.0 498.0Q390.0 488.0 400.0 483.0Q410.0 478.0 413.0 470.0L416.0 462.0" fill="none" stroke="#29595f" stroke-width=".7"/><path d="M416.0 462.0Q430.0 470.0 439.0 474.0Q448.0 478.0 448.0 488.0L448.0 498.0" fill="none" stroke="#29595f" stroke-width=".7"/><path d="M448.0 498.0Q470.0 500.0 480.0 498.5Q490.0 497.0 503.5 498.5L517.0 500.0" fill="none" stroke="#29595f" stroke-width=".7"/><path d="M448.0 498.0L455.0 518.0" fill="none" stroke="#29595f" stroke-width=".7"/><path d="M416.0 462.0Q430.0 452.0 438.0 453.5L446.0 455.0" fill="none" stroke="#29595f" stroke-width=".7"/><path d="M380.0 430.0Q395.0 440.0 400.0 447.5Q405.0 455.0 410.5 458.5L416.0 462.0" fill="none" stroke="#29595f" stroke-width=".7"/><path d="M427.0 427.0Q440.0 440.0 443.0 447.5L446.0 455.0" fill="none" stroke="#29595f" stroke-width=".7"/><path d="M410.0 363.0Q420.0 370.0 425.0 371.0L430.0 372.0" fill="none" stroke="#29595f" stroke-width=".7"/><path d="M280.0 49.0Q282.0 70.0 286.0 82.5L290.0 95.0" fill="none" stroke="#29595f" stroke-width=".7"/><path d="M400.0 289.0Q420.0 300.0 429.0 307.5L438.0 315.0" fill="none" stroke="#29595f" stroke-width=".7"/><path d="M362.0 236.0Q368.0 260.0 374.0 275.0L380.0 290.0" fill="none" stroke="#29595f" stroke-width=".7"/><path d="M560.0 505.0Q580.0 500.0 596.5 507.0Q613.0 514.0 626.5 515.0L640.0 516.0" fill="none" stroke="#29595f" stroke-width=".7"/><path d="M530.0 497.0L540.0 518.0" fill="none" stroke="#29595f" stroke-width=".7"/><path d="M590.0 502.0L588.0 518.0" fill="none" stroke="#29595f" stroke-width=".7"/><polygon points="265.4,54.7 270.2,56.5 275.0,64.0 279.6,69.8 284.3,74.5 289.0,75.4 290.9,82.0 296.6,88.6 301.3,96.2 306.0,99.9 309.8,107.5 316.4,113.2 323.0,118.8 328.6,126.4 330.5,130.1 323.9,133.9 321.1,139.6 316.4,137.7 312.6,130.1 310.7,122.6 306.0,113.2 301.3,109.4 298.5,103.7 293.7,98.1 290.9,91.5 284.3,86.7 278.6,82.0 273.0,78.2 270.2,75.4 269.2,67.9 266.4,60.3 264.5,56.5" fill="#93c5dc" stroke="#93c5dc" stroke-width=".6" stroke-linejoin="round"/><polygon points="424.9,226.1 432.5,223.8 436.3,229.1 437.8,235.1 440.8,240.4 446.8,243.4 452.1,244.2 454.4,249.5 458.9,254.0 455.9,259.3 452.9,265.3 449.8,271.4 446.8,277.4 443.8,281.2 441.5,277.4 440.8,271.4 439.3,267.6 434.8,266.8 430.2,269.1 426.5,272.1 421.2,272.9 416.6,271.4 412.1,269.1 407.6,266.1 404.6,260.8 403.1,253.2 402.3,246.5 403.8,250.2 406.1,257.8 409.1,263.1 413.6,264.6 418.2,262.3 421.9,257.0 426.5,254.0 432.5,252.5 437.8,251.7 433.2,248.0 429.5,242.7 426.5,236.6 424.9,230.6" fill="#a9c5e5"/><polygon points="479.4,299.4 485.6,294.5 490.5,287.2 494.2,282.3 500.3,288.4 504.0,299.4 501.5,310.5 496.6,316.6 492.9,311.7 489.3,314.2 485.6,309.3 481.9,306.8" fill="#a9c5e5"/><polygon points="499.1,319.1 504.0,321.5 510.1,336.3 507.7,336.3 501.5,326.4" fill="#a9c5e5"/><polygon points="441.4,270.0 448.8,270.0 447.5,277.4 442.6,281.0 440.2,274.9" fill="#a9c5e5"/><polygon points="479.4,304.4 483.1,306.8 485.6,310.5 484.3,312.9 480.7,309.3" fill="#8cc0d8" opacity=".55"/><path d="M383.2 300.8Q388.4 294.0 391.5 291.7L394.5 289.5" fill="none" stroke="#a4c6e0" stroke-width="1.1"/><path d="M399.1 299.2Q402.7 294.4 404.9 293.8Q407.2 293.1 410.8 293.5L414.4 294.0" fill="none" stroke="#a4c6e0" stroke-width="1"/><polygon points="474.1,255.8 483.9,256.6 482.4,264.2 483.2,270.2 479.4,270.2 476.4,265.7 478.6,261.1" fill="#a9c5e5"/><path d="M456 277.7L462 282.3L471.1 283.8L478.6 284.5L486.2 279.2L488.5 272.5L492.2 272.5L496.8 277.7L499 283.8" fill="none" stroke="#a8c8e0" stroke-width=".8"/><circle cx="612.9" cy="260.7" r="1.1" fill="#e8c83a"/><polygon points="326.2,418.1 330.7,415.4 336.4,419.2 340.9,427.2 346.5,428.3 353.3,422.6 360.1,420.8 366.9,423.8 371.4,427.2 362.4,431.7 356.7,439.6 346.5,443.0 340.9,438.5 337.5,432.8 328.4,428.3 325.7,422.6" fill="#82b9d1"/><path d="M462.4 363.7Q476.0 362.6 482.8 364.3Q489.6 366.0 497.5 365.4Q505.4 364.8 511.1 364.0Q516.7 363.2 522.4 359.5Q528.1 355.8 532.6 356.3Q537.1 356.9 540.5 360.3Q543.9 363.7 543.9 369.4Q543.9 375.0 547.3 380.7Q550.7 386.3 558.6 389.7Q566.5 393.1 573.3 390.9Q580.1 388.6 585.8 385.2Q591.4 381.8 598.2 380.7Q605.0 379.5 610.7 381.8Q616.3 384.1 620.9 388.0L625.4 392.0" fill="none" stroke="#b5d3ea" stroke-width="2.6" stroke-linejoin="round"/><path d="M616.3 384.1Q623.1 388.6 625.4 393.1Q627.7 397.6 629.9 402.2L632.2 406.7" fill="none" stroke="#b5d3ea" stroke-width="4"/><path d="M462.5 363.5Q452.0 366.0 448.0 369.0Q444.0 372.0 440.0 378.0Q436.0 384.0 433.1 392.0Q430.3 400.0 426.9 406.8Q423.5 413.6 418.9 423.8Q414.4 434.0 413.3 439.6Q412.2 445.3 413.3 449.2Q414.4 453.2 407.6 456.0Q400.9 458.8 395.2 462.2Q389.5 465.6 386.1 470.1Q382.8 474.7 376.0 474.7Q369.2 474.7 366.4 479.2Q363.5 483.7 362.9 491.6Q362.4 499.6 356.8 504.1Q351.1 508.6 345.4 510.3Q339.7 512.0 332.9 514.9L326.2 517.7" fill="none" stroke="#a6cde4" stroke-width="1.7" stroke-linejoin="round"/><path d="M462.5 363.5Q452.0 366.0 448.0 369.0Q444.0 372.0 440.0 378.0Q436.0 384.0 433.1 392.0Q430.3 400.0 426.9 406.8L423.5 413.6" fill="none" stroke="#b5d3ea" stroke-width="2.4" stroke-linejoin="round"/><path d="M387 468Q390 458 394 462Q392 470 384 474" fill="none" stroke="#9ccae0" stroke-width=".8"/><path d="M600 400Q640 404 680 396" fill="none" stroke="#44a9b8" stroke-width=".6"/><path d="M265.1 94.3Q269.6 107.9 274.1 112.4Q278.6 116.9 285.4 121.4Q292.2 126.0 296.7 132.7Q301.3 139.5 303.5 142.9Q305.8 146.3 309.2 148.6Q312.6 150.9 318.2 150.3L323.9 149.7" fill="none" stroke="#4a7a3c" stroke-width="2.55" stroke-linejoin="round" stroke-linecap="round"/><path d="M323.9 149.7Q330.7 138.4 333.5 136.1L336.4 133.9" fill="none" stroke="#4a7a3c" stroke-width="2.55" stroke-linejoin="round" stroke-linecap="round"/><path d="M323.9 149.7Q326.2 157.6 325.0 162.2L323.9 166.7" fill="none" stroke="#4a7a3c" stroke-width="2.55" stroke-linejoin="round" stroke-linecap="round"/><path d="M306.9 155.4Q310.3 162.2 312.6 163.5Q314.9 164.9 319.4 165.8Q323.9 166.7 335.2 164.4Q346.5 162.2 355.6 161.0Q364.6 159.9 373.7 157.6Q382.8 155.4 392.9 154.8Q403.1 154.3 411.0 153.7Q419.0 153.1 423.5 152.6Q428.0 152.0 434.8 146.9Q441.6 141.8 448.4 139.0Q455.2 136.1 465.6 135.0L476.0 133.9" fill="none" stroke="#4a7a3c" stroke-width="2.55" stroke-linejoin="round" stroke-linecap="round"/><path d="M417.8 144.1Q423.5 152.0 425.8 152.0Q428.0 152.0 432.6 155.9Q437.1 159.9 442.7 164.4L448.4 169.0" fill="none" stroke="#4a7a3c" stroke-width="2.55" stroke-linejoin="round" stroke-linecap="round"/><path d="M419.0 153.1L419.4 169.0" fill="none" stroke="#4a7a3c" stroke-width="2.55" stroke-linejoin="round" stroke-linecap="round"/><path d="M450.7 97.7Q459.7 102.2 467.9 103.9L476.0 105.6" fill="none" stroke="#4a7a3c" stroke-width="2.55" stroke-linejoin="round" stroke-linecap="round"/><path d="M490.7 72.8Q485.1 83.0 481.7 89.7Q478.3 96.5 477.1 99.9L476.0 103.3" fill="none" stroke="#4a7a3c" stroke-width="2.55" stroke-linejoin="round" stroke-linecap="round"/><path d="M476.0 105.6Q476.0 110.1 479.4 112.4Q482.8 114.6 484.5 119.2Q486.2 123.7 486.8 131.6Q487.3 139.5 486.8 145.2Q486.2 150.9 487.9 158.8L489.6 166.7" fill="none" stroke="#4a7a3c" stroke-width="2.55" stroke-linejoin="round" stroke-linecap="round"/><path d="M498.6 111.2Q496.4 116.9 498.1 119.2Q499.8 121.4 494.7 126.0Q489.6 130.5 482.8 132.2L476.0 133.9" fill="none" stroke="#4a7a3c" stroke-width="2.55" stroke-linejoin="round" stroke-linecap="round"/><path d="M486.2 144.1Q498.6 148.6 505.4 152.0Q512.2 155.4 515.6 158.2L519.0 161.0" fill="none" stroke="#4a7a3c" stroke-width="2.55" stroke-linejoin="round" stroke-linecap="round"/><path d="M471.5 135.0Q476.0 137.3 481.7 139.5L487.3 141.8" fill="none" stroke="#4a7a3c" stroke-width="2.55" stroke-linejoin="round" stroke-linecap="round"/><path d="M323.9 166.7Q337.5 174.7 346.5 177.5Q355.6 180.3 364.6 184.3Q373.7 188.2 382.8 192.2Q391.8 196.2 397.5 198.4Q403.1 200.7 408.8 203.5Q414.4 206.3 421.2 210.9Q428.0 215.4 435.9 219.4Q443.9 223.3 451.8 225.0Q459.7 226.7 467.9 225.0L476.0 223.3" fill="none" stroke="#4a7a3c" stroke-width="2.55" stroke-linejoin="round" stroke-linecap="round"/><path d="M419.4 167.9Q420.1 182.6 417.3 189.4Q414.4 196.2 409.9 198.4L405.4 200.7" fill="none" stroke="#4a7a3c" stroke-width="2.55" stroke-linejoin="round" stroke-linecap="round"/><path d="M405.4 200.7Q400.9 218.8 399.7 227.9Q398.6 236.9 399.7 248.2Q400.9 259.5 407.7 266.3Q414.4 273.1 421.2 278.8Q428.0 284.4 431.4 286.7L434.8 289.0" fill="none" stroke="#4a7a3c" stroke-width="2.55" stroke-linejoin="round" stroke-linecap="round"/><path d="M448.4 169.0Q459.7 182.6 464.2 191.6Q468.8 200.7 472.4 206.3L476.0 212.0" fill="none" stroke="#4a7a3c" stroke-width="2.55" stroke-linejoin="round" stroke-linecap="round"/><path d="M468.8 229.0Q464.2 243.7 459.7 253.9Q455.2 264.1 452.4 270.9Q449.5 277.6 449.0 283.3L448.4 289.0" fill="none" stroke="#4a7a3c" stroke-width="2.55" stroke-linejoin="round" stroke-linecap="round"/><path d="M394.1 234.6L398.6 234.6" fill="none" stroke="#4a7a3c" stroke-width="2.55" stroke-linejoin="round" stroke-linecap="round"/><path d="M354.5 181.4L355.6 184.8" fill="none" stroke="#4a7a3c" stroke-width="2.55" stroke-linejoin="round" stroke-linecap="round"/><path d="M473.7 223.3Q476.0 241.4 482.8 242.0Q489.6 242.6 499.8 243.1Q510.0 243.7 519.0 243.7Q528.1 243.7 534.9 246.5Q541.6 249.4 547.3 252.7Q553.0 256.1 557.5 257.8Q562.0 259.5 572.2 259.5Q582.4 259.5 590.3 259.5Q598.2 259.5 605.6 260.1L612.9 260.7" fill="none" stroke="#4a7a3c" stroke-width="2.55" stroke-linejoin="round" stroke-linecap="round"/><path d="M482.8 228.3Q489.6 242.6 493.0 251.1Q496.4 259.5 498.6 265.2Q500.9 270.9 503.2 279.9L505.4 289.0" fill="none" stroke="#4a7a3c" stroke-width="2.55" stroke-linejoin="round" stroke-linecap="round"/><path d="M528.1 229.0Q530.3 236.9 529.2 240.3L528.1 243.7" fill="none" stroke="#4a7a3c" stroke-width="2.55" stroke-linejoin="round" stroke-linecap="round"/><path d="M571.1 229.0Q575.6 243.7 579.0 251.6Q582.4 259.5 583.5 265.2Q584.6 270.9 585.8 279.9L586.9 289.0" fill="none" stroke="#4a7a3c" stroke-width="2.55" stroke-linejoin="round" stroke-linecap="round"/><path d="M571.1 236.9Q562.0 241.4 560.3 244.8Q558.6 248.2 560.3 253.9Q562.0 259.5 562.6 264.1Q563.1 268.6 561.4 273.1Q559.7 277.6 558.6 283.3L557.5 289.0" fill="none" stroke="#4a7a3c" stroke-width="2.55" stroke-linejoin="round" stroke-linecap="round"/><path d="M432.6 289.0Q441.6 298.1 444.4 301.4Q447.3 304.8 446.7 311.6Q446.1 318.4 445.6 326.3Q445.0 334.3 446.1 341.1Q447.3 347.9 446.7 353.5Q446.1 359.2 441.6 364.8Q437.1 370.5 435.9 375.0Q434.8 379.5 435.9 384.1Q437.1 388.6 439.3 390.9L441.6 393.1" fill="none" stroke="#4a7a3c" stroke-width="2.55" stroke-linejoin="round" stroke-linecap="round"/><path d="M447.3 304.8Q448.4 293.5 454.1 291.8Q459.7 290.1 464.2 289.6L468.8 289.0" fill="none" stroke="#4a7a3c" stroke-width="2.55" stroke-linejoin="round" stroke-linecap="round"/><path d="M446.1 359.2Q452.9 366.0 458.6 361.4Q464.2 356.9 470.1 355.2L476.0 353.5" fill="none" stroke="#4a7a3c" stroke-width="2.55" stroke-linejoin="round" stroke-linecap="round"/><path d="M452.9 384.1Q459.7 380.7 467.9 381.2L476.0 381.8" fill="none" stroke="#4a7a3c" stroke-width="2.55" stroke-linejoin="round" stroke-linecap="round"/><path d="M450.7 395.4Q452.9 404.4 454.1 406.7L455.2 409.0" fill="none" stroke="#4a7a3c" stroke-width="2.55" stroke-linejoin="round" stroke-linecap="round"/><path d="M457.4 388.6Q464.2 399.9 467.6 404.4L471.0 409.0" fill="none" stroke="#4a7a3c" stroke-width="2.55" stroke-linejoin="round" stroke-linecap="round"/><path d="M507.7 289.0Q511.1 307.1 513.3 315.0Q515.6 323.0 518.4 330.9Q521.3 338.8 521.8 342.2L522.4 345.6" fill="none" stroke="#4a7a3c" stroke-width="2.55" stroke-linejoin="round" stroke-linecap="round"/><path d="M555.2 289.0Q556.4 307.1 558.6 315.0Q560.9 323.0 560.3 327.5Q559.7 332.0 562.0 341.1Q564.3 350.1 566.5 359.2Q568.8 368.2 570.5 376.1Q572.2 384.1 574.5 393.1L576.7 402.2" fill="none" stroke="#4a7a3c" stroke-width="2.55" stroke-linejoin="round" stroke-linecap="round"/><path d="M586.9 289.0Q589.2 307.1 593.7 315.0Q598.2 323.0 599.9 328.6Q601.6 334.3 603.3 339.9Q605.0 345.6 609.5 351.2Q614.1 356.9 619.7 363.7Q625.4 370.5 628.8 375.0Q632.2 379.5 634.4 385.2Q636.7 390.9 637.3 396.5L637.8 402.2" fill="none" stroke="#4a7a3c" stroke-width="2.55" stroke-linejoin="round" stroke-linecap="round"/><path d="M539.4 304.8Q546.2 316.2 548.4 321.8Q550.7 327.5 551.8 329.7L553.0 332.0" fill="none" stroke="#4a7a3c" stroke-width="2.55" stroke-linejoin="round" stroke-linecap="round"/><path d="M482.8 334.3Q498.6 344.5 510.0 342.2Q521.3 339.9 528.1 336.5Q534.9 333.1 543.9 332.0Q553.0 330.9 559.7 331.4Q566.5 332.0 572.2 334.8Q577.9 337.7 589.7 338.8L601.6 339.9" fill="none" stroke="#4a7a3c" stroke-width="2.55" stroke-linejoin="round" stroke-linecap="round"/><path d="M476.0 354.6Q498.6 353.5 505.4 351.2Q512.2 349.0 517.3 347.3Q522.4 345.6 528.6 346.7Q534.9 347.9 541.6 350.1Q548.4 352.4 551.8 358.0Q555.2 363.7 562.0 368.2Q568.8 372.7 579.0 374.4Q589.2 376.1 600.5 375.6Q611.8 375.0 622.0 376.7L632.2 378.4" fill="none" stroke="#4a7a3c" stroke-width="2.55" stroke-linejoin="round" stroke-linecap="round"/><path d="M498.6 344.5Q498.6 353.5 499.8 358.6Q500.9 363.7 502.0 371.6Q503.2 379.5 502.6 386.3Q502.0 393.1 502.6 401.0L503.2 409.0" fill="none" stroke="#4a7a3c" stroke-width="2.55" stroke-linejoin="round" stroke-linecap="round"/><path d="M553.0 332.0Q550.7 345.6 547.3 352.4Q543.9 359.2 537.1 363.7Q530.3 368.2 526.9 373.9Q523.5 379.5 522.4 382.9Q521.3 386.3 526.9 390.9Q532.6 395.4 538.2 397.6L543.9 399.9" fill="none" stroke="#4a7a3c" stroke-width="2.55" stroke-linejoin="round" stroke-linecap="round"/><path d="M476.0 380.7Q498.6 382.9 510.0 384.1L521.3 385.2" fill="none" stroke="#4a7a3c" stroke-width="2.55" stroke-linejoin="round" stroke-linecap="round"/><path d="M632.2 378.4Q643.5 368.2 649.2 363.1L654.8 358.0" fill="none" stroke="#4a7a3c" stroke-width="2.55" stroke-linejoin="round" stroke-linecap="round"/><path d="M637.8 392.0Q657.1 394.3 668.4 394.8Q679.7 395.4 687.9 397.6L696.0 399.9" fill="none" stroke="#4a7a3c" stroke-width="2.55" stroke-linejoin="round" stroke-linecap="round"/><path d="M530.3 368.2Q537.1 379.5 539.4 385.2Q541.6 390.9 542.2 395.4L542.8 399.9" fill="none" stroke="#4a7a3c" stroke-width="2.55" stroke-linejoin="round" stroke-linecap="round"/><path d="M593.7 392.0L594.8 402.2" fill="none" stroke="#4a7a3c" stroke-width="2.55" stroke-linejoin="round" stroke-linecap="round"/><path d="M607.3 394.3L605.0 402.2" fill="none" stroke="#4a7a3c" stroke-width="2.55" stroke-linejoin="round" stroke-linecap="round"/><path d="M441.6 422.6Q450.7 418.1 457.4 417.0Q464.2 415.8 470.1 416.4L476.0 417.0" fill="none" stroke="#4a7a3c" stroke-width="2.55" stroke-linejoin="round" stroke-linecap="round"/><path d="M452.9 400.0Q459.7 409.1 464.2 412.4Q468.8 415.8 469.3 422.6Q469.9 429.4 468.8 435.1Q467.6 440.7 463.7 444.7Q459.7 448.7 453.5 452.1L447.3 455.5" fill="none" stroke="#4a7a3c" stroke-width="2.55" stroke-linejoin="round" stroke-linecap="round"/><path d="M500.9 393.2Q503.2 413.6 502.6 421.5Q502.0 429.4 503.7 435.1Q505.4 440.7 511.1 444.1L516.7 447.5" fill="none" stroke="#4a7a3c" stroke-width="2.55" stroke-linejoin="round" stroke-linecap="round"/><path d="M476.0 417.0Q489.6 413.6 495.8 413.6L502.0 413.6" fill="none" stroke="#4a7a3c" stroke-width="2.55" stroke-linejoin="round" stroke-linecap="round"/><path d="M476.0 422.6Q485.1 429.4 493.0 433.4Q500.9 437.3 508.8 437.9L516.7 438.5" fill="none" stroke="#4a7a3c" stroke-width="2.55" stroke-linejoin="round" stroke-linecap="round"/><path d="M446 340Q452 352 450 368Q452 384 462 390" fill="none" stroke="#1f3f46" stroke-width=".9"/><path d="M436 376Q448 380 460 376" fill="none" stroke="#1f3f46" stroke-width=".9"/><circle cx="452.6" cy="368" r="3.2" fill="none" stroke="#9fb8c8" stroke-width=".5"/><path d="M601.6 339.9Q616.3 343.3 624.3 346.7Q632.2 350.1 640.1 356.9Q648.0 363.7 652.6 366.0Q657.1 368.2 662.7 373.9Q668.4 379.5 674.1 384.1L679.7 388.6" fill="none" stroke="#1d3238" stroke-width=".7"/><circle cx="347.0" cy="99.4" r="1.5" fill="#d9a0a6" stroke="#c87880" stroke-width=".4"/><text x="347.0" y="109.1" font-size="6.1" text-anchor="middle" fill="#e8f0f0" stroke="#5d8488" stroke-width=".25" font-family="Liberation Sans,Noto Sans CJK SC,sans-serif">枣庄</text><circle cx="412.0" cy="77.6" r="1.5" fill="#d9a0a6" stroke="#c87880" stroke-width=".4"/><text x="412.0" y="87.3" font-size="6.1" text-anchor="middle" fill="#e8f0f0" stroke="#5d8488" stroke-width=".25" font-family="Liberation Sans,Noto Sans CJK SC,sans-serif">临沂</text><circle cx="283.0" cy="189.0" r="1.5" fill="#d9a0a6" stroke="#c87880" stroke-width=".4"/><text x="283.0" y="198.7" font-size="6.1" text-anchor="middle" fill="#e8f0f0" stroke="#5d8488" stroke-width=".25" font-family="Liberation Sans,Noto Sans CJK SC,sans-serif">淮北</text><circle cx="299.4" cy="223.6" r="1.5" fill="#d9a0a6" stroke="#c87880" stroke-width=".4"/><text x="299.4" y="233.3" font-size="6.1" text-anchor="middle" fill="#e8f0f0" stroke="#5d8488" stroke-width=".25" font-family="Liberation Sans,Noto Sans CJK SC,sans-serif">宿州</text><circle cx="407.0" cy="190.6" r="1.5" fill="#d9a0a6" stroke="#c87880" stroke-width=".4"/><text x="407.0" y="200.3" font-size="6.1" text-anchor="middle" fill="#e8f0f0" stroke="#5d8488" stroke-width=".25" font-family="Liberation Sans,Noto Sans CJK SC,sans-serif">宿迁</text><circle cx="470.0" cy="227.4" r="1.5" fill="#d9a0a6" stroke="#c87880" stroke-width=".4"/><text x="470.0" y="237.1" font-size="6.1" text-anchor="middle" fill="#e8f0f0" stroke="#5d8488" stroke-width=".25" font-family="Liberation Sans,Noto Sans CJK SC,sans-serif">淮安</text><circle cx="483.0" cy="127.0" r="1.5" fill="#d9a0a6" stroke="#c87880" stroke-width=".4"/><text x="483.0" y="136.7" font-size="6.1" text-anchor="middle" fill="#e8f0f0" stroke="#5d8488" stroke-width=".25" font-family="Liberation Sans,Noto Sans CJK SC,sans-serif">连云港</text><circle cx="563.6" cy="249.4" r="1.5" fill="#d9a0a6" stroke="#c87880" stroke-width=".4"/><text x="563.6" y="259.1" font-size="6.1" text-anchor="middle" fill="#e8f0f0" stroke="#5d8488" stroke-width=".25" font-family="Liberation Sans,Noto Sans CJK SC,sans-serif">盐城</text><circle cx="331.0" cy="293.4" r="1.5" fill="#d9a0a6" stroke="#c87880" stroke-width=".4"/><text x="331.0" y="303.1" font-size="6.1" text-anchor="middle" fill="#e8f0f0" stroke="#5d8488" stroke-width=".25" font-family="Liberation Sans,Noto Sans CJK SC,sans-serif">蚌埠</text><circle cx="300.6" cy="325.0" r="1.5" fill="#d9a0a6" stroke="#c87880" stroke-width=".4"/><text x="300.6" y="334.7" font-size="6.1" text-anchor="middle" fill="#e8f0f0" stroke="#5d8488" stroke-width=".25" font-family="Liberation Sans,Noto Sans CJK SC,sans-serif">淮南</text><circle cx="410.6" cy="357.0" r="1.5" fill="#d9a0a6" stroke="#c87880" stroke-width=".4"/><text x="410.6" y="366.7" font-size="6.1" text-anchor="middle" fill="#e8f0f0" stroke="#5d8488" stroke-width=".25" font-family="Liberation Sans,Noto Sans CJK SC,sans-serif">滁州</text><circle cx="427.0" cy="419.4" r="1.5" fill="#d9a0a6" stroke="#c87880" stroke-width=".4"/><text x="427.0" y="429.1" font-size="6.1" text-anchor="middle" fill="#e8f0f0" stroke="#5d8488" stroke-width=".25" font-family="Liberation Sans,Noto Sans CJK SC,sans-serif">马鞍山</text><circle cx="415.6" cy="453.6" r="1.5" fill="#d9a0a6" stroke="#c87880" stroke-width=".4"/><text x="415.6" y="463.3" font-size="6.1" text-anchor="middle" fill="#e8f0f0" stroke="#5d8488" stroke-width=".25" font-family="Liberation Sans,Noto Sans CJK SC,sans-serif">芜湖</text><circle cx="368.8" cy="492.0" r="1.5" fill="#d9a0a6" stroke="#c87880" stroke-width=".4"/><text x="368.8" y="501.7" font-size="6.1" text-anchor="middle" fill="#e8f0f0" stroke="#5d8488" stroke-width=".25" font-family="Liberation Sans,Noto Sans CJK SC,sans-serif">铜陵</text><circle cx="447.6" cy="490.4" r="1.5" fill="#d9a0a6" stroke="#c87880" stroke-width=".4"/><text x="447.6" y="500.1" font-size="6.1" text-anchor="middle" fill="#e8f0f0" stroke="#5d8488" stroke-width=".25" font-family="Liberation Sans,Noto Sans CJK SC,sans-serif">宣城</text><circle cx="503.0" cy="349.0" r="1.5" fill="#d9a0a6" stroke="#c87880" stroke-width=".4"/><text x="503.0" y="358.7" font-size="6.1" text-anchor="middle" fill="#e8f0f0" stroke="#5d8488" stroke-width=".25" font-family="Liberation Sans,Noto Sans CJK SC,sans-serif">扬州</text><circle cx="506.4" cy="367.0" r="1.5" fill="#d9a0a6" stroke="#c87880" stroke-width=".4"/><text x="506.4" y="376.7" font-size="6.1" text-anchor="middle" fill="#e8f0f0" stroke="#5d8488" stroke-width=".25" font-family="Liberation Sans,Noto Sans CJK SC,sans-serif">镇江</text><circle cx="545.6" cy="342.0" r="1.5" fill="#d9a0a6" stroke="#c87880" stroke-width=".4"/><text x="545.6" y="351.7" font-size="6.1" text-anchor="middle" fill="#e8f0f0" stroke="#5d8488" stroke-width=".25" font-family="Liberation Sans,Noto Sans CJK SC,sans-serif">泰州</text><circle cx="624.4" cy="385.4" r="1.5" fill="#d9a0a6" stroke="#c87880" stroke-width=".4"/><text x="624.4" y="395.1" font-size="6.1" text-anchor="middle" fill="#e8f0f0" stroke="#5d8488" stroke-width=".25" font-family="Liberation Sans,Noto Sans CJK SC,sans-serif">南通</text><circle cx="560.0" cy="498.4" r="1.5" fill="#d9a0a6" stroke="#c87880" stroke-width=".4"/><text x="560.0" y="508.1" font-size="6.1" text-anchor="middle" fill="#e8f0f0" stroke="#5d8488" stroke-width=".25" font-family="Liberation Sans,Noto Sans CJK SC,sans-serif">湖州</text><circle cx="615.4" cy="508.4" r="1.5" fill="#d9a0a6" stroke="#c87880" stroke-width=".4"/><text x="615.4" y="518.1" font-size="6.1" text-anchor="middle" fill="#e8f0f0" stroke="#5d8488" stroke-width=".25" font-family="Liberation Sans,Noto Sans CJK SC,sans-serif">嘉兴</text><circle cx="316.4" cy="160.0" r="1.5" fill="#d9a0a6" stroke="#c87880" stroke-width=".4"/><text x="316.4" y="169.7" font-size="6.1" text-anchor="middle" fill="#e8f0f0" stroke="#5d8488" stroke-width=".25" font-family="Liberation Sans,Noto Sans CJK SC,sans-serif">徐州</text><circle cx="319.4" cy="405" r="1.5" fill="#d9a0a6" stroke="#c87880" stroke-width=".4"/><text x="320" y="401.4" font-size="6.6" text-anchor="middle" fill="#eef4f4" stroke="#5d8488" stroke-width=".25" font-family="Liberation Sans,Noto Sans CJK SC,sans-serif">合肥</text><circle cx="451.6" cy="381" r="1.7" fill="#e87078"/><text x="451.4" y="376.6" font-size="7" text-anchor="middle" fill="#fff" font-family="Liberation Sans,Noto Sans CJK SC,sans-serif">南京</text><circle cx="259.4" cy="411" r="1.5" fill="#b89aa0"/><text x="261" y="420.4" font-size="5.4" text-anchor="middle" fill="#cfdcdc" font-family="Liberation Sans,Noto Sans CJK SC,sans-serif">六安</text><text x="264.6" y="53.4" font-size="5.2" text-anchor="middle" fill="#cfe0e0" font-family="Liberation Sans,Noto Sans CJK SC,sans-serif">济宁</text><rect x="474.6" y="103" width="2.2" height="5" fill="#f06a3a"/><rect x="498" y="362.6" width="2" height="5" fill="#f08a3a"/><g transform="translate(325.4 144.4)"><path d="M0 6.6Q-4.9 2.6 -4.9 -0.6A4.9 4.9 0 0 1 4.9 -0.6Q4.9 2.6 0 6.6Z" fill="#ea2f3a" stroke="#f7a0a4" stroke-width=".4"/><path d="M0 -3.6L2.2 1.3H-2.2Z" fill="#fff"/><path d="M-2.9 2.1H2.9" stroke="#fff" stroke-width=".8"/><path d="M-1.3 -.7H1.3" stroke="#ea2f3a" stroke-width=".5"/></g><g transform="translate(320.4 143.2)"><path d="M0 6.6Q-4.9 2.6 -4.9 -0.6A4.9 4.9 0 0 1 4.9 -0.6Q4.9 2.6 0 6.6Z" fill="#ea2f3a" stroke="#f7a0a4" stroke-width=".4"/><path d="M0 -3.6L2.2 1.3H-2.2Z" fill="#fff"/><path d="M-2.9 2.1H2.9" stroke="#fff" stroke-width=".8"/><path d="M-1.3 -.7H1.3" stroke="#ea2f3a" stroke-width=".5"/></g><g transform="translate(306.3 153.0)"><path d="M0 6.6Q-4.9 2.6 -4.9 -0.6A4.9 4.9 0 0 1 4.9 -0.6Q4.9 2.6 0 6.6Z" fill="#ea2f3a" stroke="#f7a0a4" stroke-width=".4"/><path d="M0 -3.6L2.2 1.3H-2.2Z" fill="#fff"/><path d="M-2.9 2.1H2.9" stroke="#fff" stroke-width=".8"/><path d="M-1.3 -.7H1.3" stroke="#ea2f3a" stroke-width=".5"/></g><g transform="translate(310.6 158.4)"><path d="M0 6.6Q-4.9 2.6 -4.9 -0.6A4.9 4.9 0 0 1 4.9 -0.6Q4.9 2.6 0 6.6Z" fill="#ea2f3a" stroke="#f7a0a4" stroke-width=".4"/><path d="M0 -3.6L2.2 1.3H-2.2Z" fill="#fff"/><path d="M-2.9 2.1H2.9" stroke="#fff" stroke-width=".8"/><path d="M-1.3 -.7H1.3" stroke="#ea2f3a" stroke-width=".5"/></g><g transform="translate(325.2 163.2)"><path d="M0 6.6Q-4.9 2.6 -4.9 -0.6A4.9 4.9 0 0 1 4.9 -0.6Q4.9 2.6 0 6.6Z" fill="#ea2f3a" stroke="#f7a0a4" stroke-width=".4"/><path d="M0 -3.6L2.2 1.3H-2.2Z" fill="#fff"/><path d="M-2.9 2.1H2.9" stroke="#fff" stroke-width=".8"/><path d="M-1.3 -.7H1.3" stroke="#ea2f3a" stroke-width=".5"/></g><g transform="translate(441.6 136.3)"><path d="M0 6.6Q-4.9 2.6 -4.9 -0.6A4.9 4.9 0 0 1 4.9 -0.6Q4.9 2.6 0 6.6Z" fill="#ea2f3a" stroke="#f7a0a4" stroke-width=".4"/><path d="M0 -3.6L2.2 1.3H-2.2Z" fill="#fff"/><path d="M-2.9 2.1H2.9" stroke="#fff" stroke-width=".8"/><path d="M-1.3 -.7H1.3" stroke="#ea2f3a" stroke-width=".5"/></g><g transform="translate(447.2 157.9)"><path d="M0 6.6Q-4.9 2.6 -4.9 -0.6A4.9 4.9 0 0 1 4.9 -0.6Q4.9 2.6 0 6.6Z" fill="#ea2f3a" stroke="#f7a0a4" stroke-width=".4"/><path d="M-1.5 -2.8V2.2M1.5 -2.8V2.2" stroke="#fff" stroke-width="1.1"/><path d="M-2.8 -1.2H2.8M-2.8 .9H2.8" stroke="#fff" stroke-width=".55"/></g><g transform="translate(519.4 154.1)"><path d="M0 6.6Q-4.9 2.6 -4.9 -0.6A4.9 4.9 0 0 1 4.9 -0.6Q4.9 2.6 0 6.6Z" fill="#ea2f3a" stroke="#f7a0a4" stroke-width=".4"/><path d="M0 -3.6L2.2 1.3H-2.2Z" fill="#fff"/><path d="M-2.9 2.1H2.9" stroke="#fff" stroke-width=".8"/><path d="M-1.3 -.7H1.3" stroke="#ea2f3a" stroke-width=".5"/></g><g transform="translate(443.9 216.1)"><path d="M0 6.6Q-4.9 2.6 -4.9 -0.6A4.9 4.9 0 0 1 4.9 -0.6Q4.9 2.6 0 6.6Z" fill="#ea2f3a" stroke="#f7a0a4" stroke-width=".4"/><path d="M0 -3.6L2.2 1.3H-2.2Z" fill="#fff"/><path d="M-2.9 2.1H2.9" stroke="#fff" stroke-width=".8"/><path d="M-1.3 -.7H1.3" stroke="#ea2f3a" stroke-width=".5"/></g><g transform="translate(542.2 242.7)"><path d="M0 6.6Q-4.9 2.6 -4.9 -0.6A4.9 4.9 0 0 1 4.9 -0.6Q4.9 2.6 0 6.6Z" fill="#ea2f3a" stroke="#f7a0a4" stroke-width=".4"/><path d="M0 -3.6L2.2 1.3H-2.2Z" fill="#fff"/><path d="M-2.9 2.1H2.9" stroke="#fff" stroke-width=".8"/><path d="M-1.3 -.7H1.3" stroke="#ea2f3a" stroke-width=".5"/></g><g transform="translate(522.4 336.7)"><path d="M0 6.6Q-4.9 2.6 -4.9 -0.6A4.9 4.9 0 0 1 4.9 -0.6Q4.9 2.6 0 6.6Z" fill="#ea2f3a" stroke="#f7a0a4" stroke-width=".4"/><path d="M0 -3.6L2.2 1.3H-2.2Z" fill="#fff"/><path d="M-2.9 2.1H2.9" stroke="#fff" stroke-width=".8"/><path d="M-1.3 -.7H1.3" stroke="#ea2f3a" stroke-width=".5"/></g><g transform="translate(543.2 325.5)"><path d="M0 6.6Q-4.9 2.6 -4.9 -0.6A4.9 4.9 0 0 1 4.9 -0.6Q4.9 2.6 0 6.6Z" fill="#ea2f3a" stroke="#f7a0a4" stroke-width=".4"/><path d="M0 -3.6L2.2 1.3H-2.2Z" fill="#fff"/><path d="M-2.9 2.1H2.9" stroke="#fff" stroke-width=".8"/><path d="M-1.3 -.7H1.3" stroke="#ea2f3a" stroke-width=".5"/></g><g transform="translate(556.8 324.5)"><path d="M0 6.6Q-4.9 2.6 -4.9 -0.6A4.9 4.9 0 0 1 4.9 -0.6Q4.9 2.6 0 6.6Z" fill="#ea2f3a" stroke="#f7a0a4" stroke-width=".4"/><path d="M0 -3.6L2.2 1.3H-2.2Z" fill="#fff"/><path d="M-2.9 2.1H2.9" stroke="#fff" stroke-width=".8"/><path d="M-1.3 -.7H1.3" stroke="#ea2f3a" stroke-width=".5"/></g><g transform="translate(601.6 328.3)"><path d="M0 6.6Q-4.9 2.6 -4.9 -0.6A4.9 4.9 0 0 1 4.9 -0.6Q4.9 2.6 0 6.6Z" fill="#ea2f3a" stroke="#f7a0a4" stroke-width=".4"/><path d="M-1.5 -2.8V2.2M1.5 -2.8V2.2" stroke="#fff" stroke-width="1.1"/><path d="M-2.8 -1.2H2.8M-2.8 .9H2.8" stroke="#fff" stroke-width=".55"/></g><g transform="translate(608.4 361.8)"><rect x="0" y="0" width="13.6" height="6.6" rx="1.6" fill="#f2b51d"/><rect x="3.2" y=".8" width="6.4" height="5" fill="#2a2a2a"/><rect x="5.6" y=".4" width="1.6" height="5.8" fill="#f2b51d"/><rect x="10" y="1" width="2.6" height="4.6" rx=".8" fill="#3a3a3a"/></g><text x="615.2" y="375.4" font-size="3.6" text-anchor="middle" fill="#cfe0e0" font-family="Liberation Sans,Noto Sans CJK SC,sans-serif">巡 查</text><rect x="509.6" y="162.8" width="15" height="6" rx="1.4" fill="#f2b51d"/><rect x="512.6" y="163.6" width="8.6" height="5" fill="#2a2a2a"/><rect x="515.4" y="163.2" width="1.6" height="5.6" fill="#f2b51d"/></svg>
<div class="a" style="left:255px;top:49px;width:1.9px;height:469.2px;background:#1c282c"></div>
<div class="a" style="left:89px;top:48.2px;width:884.6px;height:1.2px;background:linear-gradient(#d4e4f4,#7fa6c8)"></div>
<svg style="left:267.3px;top:54.9px" width="21.0" height="21.0" viewBox="-10.5 -10.5 21 21"><circle r="10.1" fill="#40b5d1" stroke="none" stroke-width=".6"/><rect x="-3.1" y="-5.6" width="6.2" height="11.2" rx="1.1" fill="#fff"/><circle cy="-3.2" r=".95" fill="#3fb4d0"/><circle cy="0" r=".95" fill="#3fb4d0"/><circle cy="3.2" r=".95" fill="#3fb4d0"/></svg>
<svg style="left:294.1px;top:54.9px" width="21.0" height="21.0" viewBox="-10.5 -10.5 21 21"><circle r="10.1" fill="#242428" stroke="#8a8a70" stroke-width=".6"/><g transform="rotate(20)"><rect x="-6.6" y="-5" width="14" height="6.2" rx="2" fill="#fff"/><path d="M-6.6 -2.2L7.4 -3.4" stroke="#2a2a2e" stroke-width=".5"/><circle cx="5" cy="-.8" r="1.25" fill="#2a2a2e"/><path d="M-4.6 1.2L-1.2 3.6L1 1.2Z" fill="#fff"/></g><path d="M-6.6 2.4L-2.2 5.2L-3.4 7L-7 5Z" fill="#fff"/><path d="M-7.4 1.8V6" stroke="#fff" stroke-width="1.1"/></svg>
<svg style="left:320.8px;top:54.9px" width="21.0" height="21.0" viewBox="-10.5 -10.5 21 21"><circle r="10.1" fill="#40b5d1" stroke="none" stroke-width=".6"/><ellipse cx="0" cy="1.3" rx="3.5" ry="4.4" fill="#fff"/><path d="M-2.4 -2.6Q0 -5.8 2.4 -2.6Z" fill="#fff"/><g stroke="#fff" stroke-width=".95" fill="none" stroke-linecap="round"><path d="M-3.2 -.8L-5.4 -2.6M-3.5 1.6H-5.8M-3.2 3.8L-5.2 5.6M3.2 -.8L5.4 -2.6M3.5 1.6H5.8M3.2 3.8L5.2 5.6M-1.2 -4.6L-2.4 -6.2M1.2 -4.6L2.4 -6.2"/></g><path d="M0 -1.4V5.4" stroke="#3fb4d0" stroke-width=".55"/><path d="M-3.3 -.9H3.3" stroke="#3fb4d0" stroke-width=".5"/></svg>
<svg style="left:349px;top:57px" width="21" height="12" viewBox="0 0 21 12"><rect x=".4" y=".6" width="9.6" height="10.6" rx="2.2" fill="#9a9fa2"/><rect x="2.6" y="2" width="4.6" height="7.8" rx="1" fill="#3a3d40"/><rect x="7.2" y="1.4" width="2.4" height="9" fill="#d8dcdc"/><rect x="10.6" y=".8" width="9.8" height="10.2" fill="#1e1f21"/><rect x="10" y="3" width="1.2" height="6" fill="#e8e8e8"/></svg>
<div class="t" style="left:354.4px;top:71.8px;font-size:5px;color:#9bb4b8;letter-spacing:2px">巡查</div>
<svg style="left:667.6px;top:55px" width="21" height="21" viewBox="-10.5 -10.5 21 21"><circle r="10.2" fill="#202023"/><path d="M-1.6 3.6H2.8Q5.4 3.4 5.2 1Q4.8 -1 2.8 -1Q2.2 -3.6 -0.6 -3.4Q-3 -3 -3 -0.6Q-5.2 -0.2 -5 1.8Q-4.6 3.6 -2.6 3.6" fill="none" stroke="#fff" stroke-width="1.3" stroke-linecap="round"/><path d="M-2.6 1.4Q-1 -0.4 .8 1.2" fill="none" stroke="#fff" stroke-width="1" /></svg>
<div class="a" style="left:261px;top:341.0px;width:21.8px;height:21.0px;background:rgba(36,74,82,.92)"></div>
<svg style="left:0;top:0" width="982" height="530"><polygon points="271.90,347.30 272.93,350.08 275.89,350.20 273.56,352.04 274.37,354.90 271.90,353.25 269.43,354.90 270.24,352.04 267.91,350.20 270.87,350.08" fill="#f4f6f6"/></svg>
<div class="a" style="left:261px;top:363.1px;width:21.8px;height:21.0px;background:rgba(36,74,82,.92)"></div>
<svg style="left:0;top:0" width="982" height="530"><path d="M268.3 377.2h2.2v-4h-2.2zM271.1 377.2h3.6v-7.4l-3.6 1.2z" fill="#f4f6f6"/><path d="M272.9 377.0v-6" stroke="#244a52" stroke-width=".5"/></svg>
<div class="a" style="left:261px;top:385.1px;width:21.8px;height:21.0px;background:rgba(36,74,82,.92)"></div>
<svg style="left:0;top:0" width="982" height="530"><path d="M268.4 399.4h7v-4.6l-2-1v-2l-1.4-.8l-1.4 .8v2.4l-2.2 1z" fill="#f4f6f6"/></svg>
<div class="a" style="left:261px;top:407.2px;width:21.8px;height:21.0px;background:rgba(36,74,82,.92)"></div>
<svg style="left:0;top:0" width="982" height="530"><text x="271.9" y="421.5" font-size="10.4" text-anchor="middle" fill="#f4f6f6" font-family="Liberation Sans,sans-serif">P</text></svg>
<div class="a" style="left:261px;top:429.2px;width:21.8px;height:21.0px;background:rgba(36,74,82,.92)"></div>
<svg style="left:0;top:0" width="982" height="530"><path d="M269.1 435.7h5v7.6h-5z" fill="none" stroke="#f4f6f6" stroke-width="1"/><path d="M269.1 435.7l3 1v7l-3 -.8z" fill="#f4f6f6"/><path d="M273.3 443.3h2.6" stroke="#f4f6f6" stroke-width="1.2"/></svg>
<div class="a" style="left:261px;top:451.3px;width:21.8px;height:21.0px;background:rgba(36,74,82,.92)"></div>
<svg style="left:0;top:0" width="982" height="530"><path d="M267.7 459.8h8.4q0 4.2 -4.2 4.2q-4.2 0 -4.2 -4.2z" fill="#f4f6f6"/></svg>
<div class="a" style="left:261px;top:473.4px;width:21.8px;height:21.0px;background:rgba(36,74,82,.92)"></div>
<svg style="left:0;top:0" width="982" height="530"><rect x="268.5" y="480.5" width="6.8" height="6.8" fill="none" stroke="#f4f6f6" stroke-width="1"/><path d="M270.1 483.5h3.6v3.4h-3.6z" fill="#f4f6f6"/><path d="M271.9 481.3v1.6" stroke="#f4f6f6" stroke-width=".8"/></svg>
<div class="a" style="left:261px;top:495.4px;width:21.8px;height:21.6px;background:#fff"></div>
<svg style="left:0;top:0" width="982" height="530"><path d="M267.9 503.5h8M267.9 506.1h8M267.9 508.7h8" stroke="#222" stroke-width="1"/></svg>
<div class="a" style="left:479.4px;top:168.2px;width:137px;height:60.4px;background:#212124"></div>
<svg style="left:487.6px;top:177.4px" width="7" height="7" viewBox="0 0 7 7"><path d="M3.5 .6L6.4 6.2H.6Z" fill="none" stroke="#45b6cf" stroke-width=".7"/><path d="M3.5 2.6V4.4" stroke="#45b6cf" stroke-width=".6"/></svg>
<div class="t c" style="left:495.4px;top:177.8px;font-size:6.5px">交安</div>
<div class="t c" style="left:517.6px;top:178px;font-size:6.4px">S18</div>
<div class="t c" style="left:532.6px;top:178px;font-size:6.4px;letter-spacing:.35px">k85+400</div>
<div class="t c" style="left:568.4px;top:177.8px;font-size:6.4px">盐淮方向</div>
<div class="t" style="left:488px;top:192.4px;font-size:5.75px;font-weight:700;letter-spacing:-.12px">交安及沿线设施-防撞网-其他</div>
<div class="t" style="left:488px;top:202.6px;font-size:5.7px;font-weight:700;letter-spacing:-.12px"><span class="c" style="font-weight:400">数量：</span>10处列立的方法来记录</div>
<div class="t" style="left:488px;top:212.8px;font-size:5.7px;font-weight:700;letter-spacing:-.12px"><span class="c" style="font-weight:400">位置：</span>紧急停靠带</div>
<svg style="left:572.6px;top:191.4px" width="8" height="7" viewBox="0 0 8 7"><path d="M4 .7L7.4 6.4H.6Z" fill="none" stroke="#3f9a58" stroke-width=".8"/></svg>
<div class="t" style="left:582.6px;top:192px;font-size:5.7px;font-weight:700">无</div>
<svg style="left:573px;top:201.7px" width="7" height="7" viewBox="0 0 7 7"><circle cx="3.5" cy="3.5" r="2.9" fill="none" stroke="#e8802c" stroke-width=".8"/><path d="M3.5 1.8V3.7H4.9" fill="none" stroke="#e8802c" stroke-width=".6"/></svg>
<div class="t" style="left:582.6px;top:202.3px;font-size:5.5px;font-weight:700">集中处理</div>
<svg style="left:573px;top:212.4px" width="7" height="7" viewBox="0 0 7 7"><circle cx="3.5" cy="3.5" r="2.9" fill="none" stroke="#e8802c" stroke-width=".8"/><path d="M3.5 1.8V3.7H4.9" fill="none" stroke="#e8802c" stroke-width=".6"/></svg>
<div class="t" style="left:582.6px;top:213.0px;font-size:5.5px;font-weight:700">无</div>
<div class="a" style="left:516.6px;top:402.6px;width:181px;height:92px;background:#212124"></div>
<svg style="left:523px;top:411px" width="7" height="8" viewBox="0 0 7 8"><rect x=".6" y=".9" width="5.6" height="6.5" rx=".8" fill="none" stroke="#45b6cf" stroke-width=".8"/><path d="M2 4.2L3.1 5.4L5 3" fill="none" stroke="#45b6cf" stroke-width=".8"/></svg>
<div class="t c" style="left:531px;top:412px;font-size:6px">巡查实况</div>
<div class="t" style="left:596px;top:411.2px;width:77px;text-align:right;font-size:6.9px;color:#d3c9aa"><span class="c">236</span> <span style="color:#ddd">/</span> 1982公里</div>
<svg style="left:682.4px;top:411.6px" width="7" height="7" viewBox="0 0 7 7"><path d="M.8 .8L6.2 6.2M6.2 .8L.8 6.2" stroke="#e6e6e6" stroke-width="1"/></svg>
<svg style="left:0;top:0" width="982" height="530" viewBox="0 0 982 530"><path d="M536 430.6V475.9H684.4" fill="none" stroke="#2e8796" stroke-width=".9"/><text x="533" y="477.4" font-size="5.6" fill="#f2f2f2" text-anchor="end" font-family="Liberation Sans,sans-serif">0</text><path d="M534.4 475.5H536" stroke="#2e8796" stroke-width=".6"/><text x="533" y="470.0" font-size="5.6" fill="#f2f2f2" text-anchor="end" font-family="Liberation Sans,sans-serif">100</text><path d="M534.4 468.1H536" stroke="#2e8796" stroke-width=".6"/><text x="533" y="462.6" font-size="5.6" fill="#f2f2f2" text-anchor="end" font-family="Liberation Sans,sans-serif">200</text><path d="M534.4 460.7H536" stroke="#2e8796" stroke-width=".6"/><text x="533" y="455.2" font-size="5.6" fill="#f2f2f2" text-anchor="end" font-family="Liberation Sans,sans-serif">300</text><path d="M534.4 453.3H536" stroke="#2e8796" stroke-width=".6"/><text x="533" y="447.8" font-size="5.6" fill="#f2f2f2" text-anchor="end" font-family="Liberation Sans,sans-serif">400</text><path d="M534.4 445.9H536" stroke="#2e8796" stroke-width=".6"/><text x="533" y="440.4" font-size="5.6" fill="#f2f2f2" text-anchor="end" font-family="Liberation Sans,sans-serif">500</text><path d="M534.4 438.5H536" stroke="#2e8796" stroke-width=".6"/><text x="533" y="433.0" font-size="5.6" fill="#f2f2f2" text-anchor="end" font-family="Liberation Sans,sans-serif">600</text><path d="M534.4 431.1H536" stroke="#2e8796" stroke-width=".6"/><rect x="544.6" y="436.6" width="13.3" height="38.9" fill="#545456"/><rect x="544.6" y="462.2" width="13.3" height="13.3" fill="#7ed9f0"/><text x="551.2" y="470.8" font-size="5.4" fill="#3a6a78" text-anchor="middle" font-family="Liberation Sans,sans-serif">180</text><text x="551.2" y="434.0" font-size="5.6" fill="#747476" text-anchor="middle" font-family="Liberation Sans,sans-serif">526</text><text x="551.2" y="483.6" font-size="5.6" fill="#45b6cf" text-anchor="middle" font-family="Liberation Sans,Noto Sans CJK SC,sans-serif">京沪</text><rect x="574.2" y="453.0" width="13.3" height="22.5" fill="#545456"/><rect x="574.2" y="471.4" width="13.3" height="4.1" fill="#7ed9f0"/><text x="580.9" y="474.3" font-size="5.4" fill="#3a6a78" text-anchor="middle" font-family="Liberation Sans,sans-serif">56</text><text x="580.9" y="450.4" font-size="5.6" fill="#747476" text-anchor="middle" font-family="Liberation Sans,sans-serif">304</text><text x="580.9" y="483.6" font-size="5.6" fill="#45b6cf" text-anchor="middle" font-family="Liberation Sans,Noto Sans CJK SC,sans-serif">宁靖盐</text><rect x="603.9" y="441.9" width="13.3" height="33.6" fill="#545456"/><text x="610.5" y="474.7" font-size="4.6" fill="#777" text-anchor="middle" font-family="Liberation Sans,sans-serif">0</text><text x="610.5" y="439.3" font-size="5.6" fill="#747476" text-anchor="middle" font-family="Liberation Sans,sans-serif">454</text><text x="610.5" y="483.6" font-size="5.6" fill="#45b6cf" text-anchor="middle" font-family="Liberation Sans,Noto Sans CJK SC,sans-serif">东部沿海</text><rect x="633.5" y="445.0" width="13.3" height="30.5" fill="#545456"/><text x="640.2" y="474.7" font-size="4.6" fill="#777" text-anchor="middle" font-family="Liberation Sans,sans-serif">0</text><text x="640.2" y="442.4" font-size="5.6" fill="#747476" text-anchor="middle" font-family="Liberation Sans,sans-serif">412</text><text x="640.2" y="483.6" font-size="5.6" fill="#45b6cf" text-anchor="middle" font-family="Liberation Sans,Noto Sans CJK SC,sans-serif">徐连</text><rect x="663.2" y="454.3" width="13.3" height="21.2" fill="#545456"/><text x="669.9" y="474.7" font-size="4.6" fill="#777" text-anchor="middle" font-family="Liberation Sans,sans-serif">0</text><text x="669.9" y="451.7" font-size="5.6" fill="#747476" text-anchor="middle" font-family="Liberation Sans,sans-serif">286</text><text x="669.9" y="483.6" font-size="5.6" fill="#45b6cf" text-anchor="middle" font-family="Liberation Sans,Noto Sans CJK SC,sans-serif">锡常盐</text></svg>
<div class="a" style="left:697.4px;top:49.4px;width:276.2px;height:468.8px;background:#252529"></div>
<div class="a" style="left:697.4px;top:49.6px;width:276.2px;height:17.4px;background:#34363c"></div>
<div class="t" style="left:698.0px;top:57.6px;width:19.5px;text-align:center;font-size:5.8px;font-weight:700;color:#45b6cf">当日</div>
<div class="a" style="left:716.5px;top:50.4px;width:.9px;height:16.6px;background:#222226"></div>
<div class="t" style="left:717.5px;top:57.6px;width:18.6px;text-align:center;font-size:5.8px;font-weight:700;color:#e6e6e6">昨日</div>
<div class="a" style="left:735.1px;top:50.4px;width:.9px;height:16.6px;background:#222226"></div>
<div class="t" style="left:736.1px;top:57.6px;width:20.1px;text-align:center;font-size:5.8px;font-weight:700;color:#e6e6e6">本月</div>
<div class="a" style="left:755.2px;top:50.4px;width:.9px;height:16.6px;background:#222226"></div>
<div class="t" style="left:756.2px;top:57.6px;width:20.4px;text-align:center;font-size:5.8px;font-weight:700;color:#e6e6e6">本年</div>
<div class="a" style="left:775.6px;top:50.4px;width:.9px;height:16.6px;background:#222226"></div>
<div class="a" style="left:875.4px;top:59.8px;width:3.6px;height:3.6px;border-radius:50%;background:#e8262d"></div>
<div class="t" style="left:879.6px;top:58.7px;font-size:5.9px;color:#e8262d">告警 16</div>
<div class="a" style="left:905.4px;top:59.8px;width:3.6px;height:3.6px;border-radius:50%;background:#2c5fb8"></div>
<div class="t" style="left:909.6px;top:58.7px;font-size:5.9px;color:#2c5fb8">巡查 8</div>
<div class="a" style="left:930.6px;top:59.8px;width:3.6px;height:3.6px;border-radius:50%;background:#3c9a55"></div>
<div class="t" style="left:934.8px;top:58.7px;font-size:5.9px;color:#3c9a55">修复病害 15</div>
<svg style="left:0;top:0" width="982" height="530" viewBox="0 0 982 530"><path d="M716.2 120.6H969.6" stroke="#358f9e" stroke-width=".8"/><path d="M716.2 111.9H969.6" stroke="#358f9e" stroke-width=".8"/><path d="M716.2 103.3H969.6" stroke="#358f9e" stroke-width=".8"/><path d="M716.2 94.6H969.6" stroke="#358f9e" stroke-width=".8"/><path d="M716.2 86.0H969.6" stroke="#358f9e" stroke-width=".8"/><path d="M716.2 77.3H969.6" stroke="#358f9e" stroke-width=".8"/><text x="712.4" y="122.1" font-size="4.2" fill="#4aa6ba" text-anchor="end" font-family="Liberation Sans,sans-serif" font-weight="700">0</text><text x="712.4" y="113.4" font-size="4.2" fill="#4aa6ba" text-anchor="end" font-family="Liberation Sans,sans-serif" font-weight="700">3</text><text x="712.4" y="104.8" font-size="4.2" fill="#4aa6ba" text-anchor="end" font-family="Liberation Sans,sans-serif" font-weight="700">6</text><text x="712.4" y="96.1" font-size="4.2" fill="#4aa6ba" text-anchor="end" font-family="Liberation Sans,sans-serif" font-weight="700">9</text><text x="712.4" y="87.5" font-size="4.2" fill="#4aa6ba" text-anchor="end" font-family="Liberation Sans,sans-serif" font-weight="700">12</text><text x="712.4" y="78.8" font-size="4.2" fill="#4aa6ba" text-anchor="end" font-family="Liberation Sans,sans-serif" font-weight="700">16</text><text x="716.2" y="127.2" font-size="4.2" fill="#4aa6ba" text-anchor="middle" font-family="Liberation Sans,sans-serif" font-weight="700">00</text><text x="727.2" y="127.2" font-size="4.2" fill="#4aa6ba" text-anchor="middle" font-family="Liberation Sans,sans-serif" font-weight="700">01</text><text x="738.2" y="127.2" font-size="4.2" fill="#4aa6ba" text-anchor="middle" font-family="Liberation Sans,sans-serif" font-weight="700">02</text><text x="749.3" y="127.2" font-size="4.2" fill="#4aa6ba" text-anchor="middle" font-family="Liberation Sans,sans-serif" font-weight="700">03</text><text x="760.3" y="127.2" font-size="4.2" fill="#4aa6ba" text-anchor="middle" font-family="Liberation Sans,sans-serif" font-weight="700">04</text><text x="771.3" y="127.2" font-size="4.2" fill="#4aa6ba" text-anchor="middle" font-family="Liberation Sans,sans-serif" font-weight="700">05</text><text x="782.3" y="127.2" font-size="4.2" fill="#4aa6ba" text-anchor="middle" font-family="Liberation Sans,sans-serif" font-weight="700">06</text><text x="793.3" y="127.2" font-size="4.2" fill="#4aa6ba" text-anchor="middle" font-family="Liberation Sans,sans-serif" font-weight="700">07</text><text x="804.3" y="127.2" font-size="4.2" fill="#4aa6ba" text-anchor="middle" font-family="Liberation Sans,sans-serif" font-weight="700">08</text><text x="815.4" y="127.2" font-size="4.2" fill="#4aa6ba" text-anchor="middle" font-family="Liberation Sans,sans-serif" font-weight="700">09</text><text x="826.4" y="127.2" font-size="4.2" fill="#4aa6ba" text-anchor="middle" font-family="Liberation Sans,sans-serif" font-weight="700">10</text><text x="837.4" y="127.2" font-size="4.2" fill="#4aa6ba" text-anchor="middle" font-family="Liberation Sans,sans-serif" font-weight="700">11</text><text x="848.4" y="127.2" font-size="4.2" fill="#4aa6ba" text-anchor="middle" font-family="Liberation Sans,sans-serif" font-weight="700">12</text><text x="859.4" y="127.2" font-size="4.2" fill="#4aa6ba" text-anchor="middle" font-family="Liberation Sans,sans-serif" font-weight="700">13</text><text x="870.4" y="127.2" font-size="4.2" fill="#4aa6ba" text-anchor="middle" font-family="Liberation Sans,sans-serif" font-weight="700">14</text><text x="881.5" y="127.2" font-size="4.2" fill="#4aa6ba" text-anchor="middle" font-family="Liberation Sans,sans-serif" font-weight="700">15</text><text x="892.5" y="127.2" font-size="4.2" fill="#4aa6ba" text-anchor="middle" font-family="Liberation Sans,sans-serif" font-weight="700">16</text><text x="903.5" y="127.2" font-size="4.2" fill="#4aa6ba" text-anchor="middle" font-family="Liberation Sans,sans-serif" font-weight="700">17</text><text x="914.5" y="127.2" font-size="4.2" fill="#4aa6ba" text-anchor="middle" font-family="Liberation Sans,sans-serif" font-weight="700">18</text><text x="925.5" y="127.2" font-size="4.2" fill="#4aa6ba" text-anchor="middle" font-family="Liberation Sans,sans-serif" font-weight="700">19</text><text x="936.5" y="127.2" font-size="4.2" fill="#4aa6ba" text-anchor="middle" font-family="Liberation Sans,sans-serif" font-weight="700">20</text><text x="947.6" y="127.2" font-size="4.2" fill="#4aa6ba" text-anchor="middle" font-family="Liberation Sans,sans-serif" font-weight="700">21</text><text x="958.6" y="127.2" font-size="4.2" fill="#4aa6ba" text-anchor="middle" font-family="Liberation Sans,sans-serif" font-weight="700">22</text><text x="969.6" y="127.2" font-size="4.2" fill="#4aa6ba" text-anchor="middle" font-family="Liberation Sans,sans-serif" font-weight="700">23</text><path d="M793.58 120.48C800.37 119.80 804.90 115.27 808.29 108.48C810.56 98.29 812.82 84.15 819.04 84.15C826.40 84.15 829.80 99.43 831.49 108.48C833.19 115.27 834.89 119.23 836.59 120.48Z" fill="#3f9159" fill-opacity=".93"/><path d="M794.71 120.48C801.50 119.23 806.03 115.27 808.86 108.48C811.12 100.56 812.82 97.16 816.22 97.16C821.87 97.16 825.27 102.82 829.80 107.91L831.49 108.48C833.19 115.27 834.89 119.23 836.59 120.48Z" fill="#2a549e" fill-opacity=".93"/><path d="M805.46 120.48C809.43 117.53 811.69 105.08 822.44 105.08C829.80 105.08 832.63 115.27 836.59 120.48Z" fill="#d0292f" fill-opacity=".93"/><path d="M848.47 120.48C852.43 117.53 854.13 83.01 859.22 83.01C864.31 83.01 866.01 117.53 869.97 120.48Z" fill="#3f9159" fill-opacity=".93"/><path d="M848.81 120.48C853.00 117.53 854.69 99.99 859.22 99.99C863.75 99.99 865.45 117.53 869.63 120.48Z" fill="#2a549e" fill-opacity=".93"/><path d="M849.04 120.48C853.56 117.53 854.69 103.39 859.22 103.39C863.75 103.39 864.88 117.53 869.41 120.48Z" fill="#d0292f" fill-opacity=".93"/></svg>
<div class="a" style="left:697.4px;top:133.2px;width:276.2px;height:17.6px;background:#34363c"></div>
<div class="a" style="left:723.7px;top:134.4px;width:1px;height:15.4px;background:#232326"></div>
<div class="a" style="left:751.5px;top:134.4px;width:1px;height:15.4px;background:#232326"></div>
<div class="a" style="left:778.0px;top:134.4px;width:1px;height:15.4px;background:#232326"></div>
<svg style="left:702.1px;top:134.6px" width="16.8" height="16.8" viewBox="-10 -10 20 20"><circle r="9.3" fill="#2c5fb8" stroke="#141618" stroke-width="1.2"/><path d="M-3.6 2.6V-1.2Q-3.6 -5 0 -5Q3.6 -5 3.6 -1.2V2.6Z" fill="#fff"/><rect x="-5" y="3.4" width="10" height="2" fill="#fff"/><rect x="-1" y="-2.4" width="2" height="3" fill="#2c5fb8"/></svg>
<svg style="left:729.6px;top:134.6px" width="16.8" height="16.8" viewBox="-10 -10 20 20"><circle r="9.3" fill="#e8262d" stroke="#141618" stroke-width="1.2"/><ellipse cx="0" cy="1" rx="3.1" ry="4" fill="#fff"/><circle cx="0" cy="-3.6" r="1.9" fill="#fff"/><g stroke="#fff" stroke-width="1" fill="none"><path d="M-3 -1L-5 -2.6M-3.2 1.2H-5.4M-3 3.2L-4.8 4.8M3 -1L5 -2.6M3.2 1.2H5.4M3 3.2L4.8 4.8M-1.4 -5L-2.4 -6.2M1.4 -5L2.4 -6.2"/></g><path d="M0 -1.8V4.6" stroke="#e8262d" stroke-width=".7"/></svg>
<svg style="left:757.4px;top:134.6px" width="16.8" height="16.8" viewBox="-10 -10 20 20"><circle r="9.3" fill="#3c9a55" stroke="#141618" stroke-width="1.2"/><circle cx="-1.4" cy="-4.4" r="1.5" fill="#fff"/><g stroke="#fff" stroke-width="1.5" fill="none" stroke-linecap="round" stroke-linejoin="round"><path d="M-1.6 -2.4L-2.6 1.2L-4.4 5M-2.6 1.2L-0.4 5M-1.6 -2L1 0.2"/><path d="M1.2 -4.4L4.6 3.6" stroke-width="1"/></g><path d="M1 5.4Q1.4 1.6 4 1.8Q6 2.4 5.8 5.4Z" fill="#fff"/></svg>
<div class="a" style="left:697.4px;top:151.0px;width:276.2px;height:22.4px;background:#4b4d53"></div>
<div class="a" style="left:697.4px;top:173.2px;width:276.2px;height:.7px;background:#2a5a66"></div>
<svg style="left:707.4px;top:156.0px" width="16.8" height="16.8" viewBox="-10 -10 20 20"><circle r="9.3" fill="#3c9a55" stroke="#141618" stroke-width="1.2"/><circle cx="-1.4" cy="-4.4" r="1.5" fill="#fff"/><g stroke="#fff" stroke-width="1.5" fill="none" stroke-linecap="round" stroke-linejoin="round"><path d="M-1.6 -2.4L-2.6 1.2L-4.4 5M-2.6 1.2L-0.4 5M-1.6 -2L1 0.2"/><path d="M1.2 -4.4L4.6 3.6" stroke-width="1"/></g><path d="M1 5.4Q1.4 1.6 4 1.8Q6 2.4 5.8 5.4Z" fill="#fff"/></svg>
<div class="t" style="left:729.4px;top:155.6px;font-size:6px;font-weight:700">17:17</div>
<div class="t" style="left:751.8px;top:155.6px;font-size:5.85px;font-weight:700;letter-spacing:-.17px">京沪-宁扬，刘斌正在对养护任务20191218-2申请验收。病害地点G40 K384+428(沪陕</div>
<div class="t" style="left:751.8px;top:161.9px;font-size:5.85px;font-weight:700;letter-spacing:-.17px">方向)，病害类型：防撞护栏板损坏</div>
<div class="a" style="left:697.4px;top:173.8px;width:276.2px;height:22.6px;background:#242428"></div>
<div class="a" style="left:697.4px;top:196.2px;width:276.2px;height:.7px;background:#2a5a66"></div>
<svg style="left:707.4px;top:178.8px" width="16.8" height="16.8" viewBox="-10 -10 20 20"><circle r="9.3" fill="#3c9a55" stroke="#141618" stroke-width="1.2"/><circle cx="-1.4" cy="-4.4" r="1.5" fill="#fff"/><g stroke="#fff" stroke-width="1.5" fill="none" stroke-linecap="round" stroke-linejoin="round"><path d="M-1.6 -2.4L-2.6 1.2L-4.4 5M-2.6 1.2L-0.4 5M-1.6 -2L1 0.2"/><path d="M1.2 -4.4L4.6 3.6" stroke-width="1"/></g><path d="M1 5.4Q1.4 1.6 4 1.8Q6 2.4 5.8 5.4Z" fill="#fff"/></svg>
<div class="t" style="left:729.4px;top:178.4px;font-size:6px;font-weight:700">17:17</div>
<div class="t" style="left:751.8px;top:178.4px;font-size:5.85px;font-weight:700;letter-spacing:-.17px">京沪-宁扬，刘斌正在对养护任务20191218-2申请验收。病害地点G40 K384+428(沪陕</div>
<div class="t" style="left:751.8px;top:184.7px;font-size:5.85px;font-weight:700;letter-spacing:-.17px">方向)，病害类型：螺栓缺失</div>
<div class="a" style="left:697.4px;top:196.8px;width:276.2px;height:20.6px;background:#242428"></div>
<div class="a" style="left:697.4px;top:217.2px;width:276.2px;height:.7px;background:#2a5a66"></div>
<svg style="left:707.4px;top:201.8px" width="16.8" height="16.8" viewBox="-10 -10 20 20"><circle r="9.3" fill="#3c9a55" stroke="#141618" stroke-width="1.2"/><circle cx="-1.4" cy="-4.4" r="1.5" fill="#fff"/><g stroke="#fff" stroke-width="1.5" fill="none" stroke-linecap="round" stroke-linejoin="round"><path d="M-1.6 -2.4L-2.6 1.2L-4.4 5M-2.6 1.2L-0.4 5M-1.6 -2L1 0.2"/><path d="M1.2 -4.4L4.6 3.6" stroke-width="1"/></g><path d="M1 5.4Q1.4 1.6 4 1.8Q6 2.4 5.8 5.4Z" fill="#fff"/></svg>
<div class="t" style="left:729.4px;top:201.4px;font-size:6px;font-weight:700">17:17</div>
<div class="t" style="left:751.8px;top:201.4px;font-size:5.85px;font-weight:700;letter-spacing:-.17px">京沪-宁扬，刘斌正在对养护任务20191218-2申请验收。病害地点G40 K384+428(沪陕</div>
<div class="t" style="left:751.8px;top:207.7px;font-size:5.85px;font-weight:700;letter-spacing:-.17px">方向)，病害类型：防撞护栏线形不顺</div>
<div class="a" style="left:971.8px;top:151px;width:1.8px;height:14px;background:#3aa5bd"></div>
<div class="a" style="left:697.4px;top:217.4px;width:276.2px;height:15.6px;background:#34363c"></div>
<div class="t c" style="left:706.4px;top:224px;font-size:5.95px;font-weight:700">京沪-宁扬&nbsp; 养护任务20191218-2</div>
<div class="t c" style="left:880px;top:224.2px;width:84.4px;text-align:right;font-size:5.8px;font-weight:700;letter-spacing:.15px">2019-12-18 13:19</div>
<div class="t" style="left:701.8px;top:241.0px;font-size:5.6px;color:#45b6cf">派发人员:</div>
<div class="t" style="left:730px;top:240.8px;font-size:5.8px;font-weight:700">丁武港</div>
<div class="t" style="left:701.8px;top:251.4px;font-size:5.6px;color:#45b6cf">病害数量:</div>
<div class="t" style="left:730px;top:251.2px;font-size:5.8px;font-weight:700">6起</div>
<div class="t" style="left:701.8px;top:261.8px;font-size:5.6px;color:#3a9db0">备注信息:</div>
<div class="a" style="left:697.4px;top:276.6px;width:136.2px;height:61.0px;background:#393b41"></div>
<div class="t c" style="left:701.8px;top:280.8px;font-size:5.8px;letter-spacing:.05px">G40 K384+428 沪陕</div>
<div class="t" style="left:807.4px;top:280.8px;font-size:5.6px;color:#f47a20">待验收</div>
<svg style="left:702.8px;top:292.3px" width="39.8" height="30.0" viewBox="0 0 40 30" preserveAspectRatio="none"><defs><linearGradient id="sky292" x1="0" y1="0" x2="0" y2="1"><stop offset="0" stop-color="#f4f4f6"/><stop offset=".4" stop-color="#e2e3e6"/><stop offset="1" stop-color="#d0d2d6"/></linearGradient></defs><rect width="40" height="30" fill="url(#sky292)"/><path d="M22 1.5Q25 .4 28 1.6Q31 .2 34 1.4Q37 .4 40 1.2V8L20 9Z" fill="#b9b9ba" opacity=".85"/><path d="M13 9.2Q15 6.6 17 7.6Q19 7 20 8.6L22 9Z" fill="#8e8e8c"/><path d="M0 10.6L12.6 9.6L21 8.2L30 7.2L40 6.4V30H0Z" fill="#7f745d"/><path d="M24 9L40 7V16L30 14Z" fill="#8b7f66" opacity=".7"/><path d="M20 16L40 14V30H27Z" fill="#8a7c62" opacity=".6"/><path d="M0 10.4L12.4 9.8L21.6 30H0Z" fill="#6e7276"/><path d="M0 10.4L12.4 9.8L13 11L0 13Z" fill="#5f6368"/><path d="M12.4 9.8L14 10L25 30H17Z" fill="#59604e"/><path d="M0 17.2L7.2 12.6L7.9 12.9L0 19Z" fill="#dcdcde"/><path d="M12.9 10.6L14 10.6L26.4 30H23.4Z" fill="#c3c7cc"/><path d="M13.4 10.6L25 30" stroke="#eceef0" stroke-width=".7"/><rect x="7.8" y="9.4" width="2.6" height="2.2" fill="#d6633c"/><rect x=".4" y="26.4" width="10.4" height="2.6" fill="#8d8458" opacity=".55"/></svg>
<div class="t c" style="left:746.4px;top:293.2px;font-size:5.6px">病害类型:</div>
<div class="t" style="left:784.6px;top:293.6px;font-size:5.75px;font-weight:700;letter-spacing:0">交安及沿线设</div>
<div class="t" style="left:784.6px;top:299.7px;font-size:5.75px;font-weight:700;letter-spacing:0">施-护栏（栏</div>
<div class="t" style="left:784.6px;top:305.7px;font-size:5.75px;font-weight:700;letter-spacing:0">杆）-柱帽缺失</div>
<div class="t c" style="left:746.4px;top:313.5px;font-size:5.6px">病害位置:</div>
<div class="t" style="left:784.6px;top:313.5px;font-size:5.5px;font-weight:700">路侧</div>
<div class="t c" style="left:746.4px;top:321.5px;font-size:5.6px">上报时间:</div>
<div class="t" style="left:784.6px;top:321.5px;font-size:5.6px">2019-12-18</div>
<div class="t" style="left:784.6px;top:327.7px;font-size:5.6px">13:19</div>
<div class="a" style="left:697.4px;top:341.8px;width:136.2px;height:61.0px;background:#393b41"></div>
<div class="t c" style="left:701.8px;top:346.0px;font-size:5.8px;letter-spacing:.05px">G40 K384+428 沪陕</div>
<div class="t" style="left:807.4px;top:346.0px;font-size:5.6px;color:#f47a20">待验收</div>
<svg style="left:702.8px;top:357.5px" width="39.8" height="30.0" viewBox="0 0 40 30" preserveAspectRatio="none"><defs><linearGradient id="sky357" x1="0" y1="0" x2="0" y2="1"><stop offset="0" stop-color="#f4f4f6"/><stop offset=".4" stop-color="#e2e3e6"/><stop offset="1" stop-color="#d0d2d6"/></linearGradient></defs><rect width="40" height="30" fill="url(#sky357)"/><path d="M22 1.5Q25 .4 28 1.6Q31 .2 34 1.4Q37 .4 40 1.2V8L20 9Z" fill="#b9b9ba" opacity=".85"/><path d="M13 9.2Q15 6.6 17 7.6Q19 7 20 8.6L22 9Z" fill="#8e8e8c"/><path d="M0 10.6L12.6 9.6L21 8.2L30 7.2L40 6.4V30H0Z" fill="#7f745d"/><path d="M24 9L40 7V16L30 14Z" fill="#8b7f66" opacity=".7"/><path d="M20 16L40 14V30H27Z" fill="#8a7c62" opacity=".6"/><path d="M0 10.4L12.4 9.8L21.6 30H0Z" fill="#6e7276"/><path d="M0 10.4L12.4 9.8L13 11L0 13Z" fill="#5f6368"/><path d="M12.4 9.8L14 10L25 30H17Z" fill="#59604e"/><path d="M0 17.2L7.2 12.6L7.9 12.9L0 19Z" fill="#dcdcde"/><path d="M12.9 10.6L14 10.6L26.4 30H23.4Z" fill="#c3c7cc"/><path d="M13.4 10.6L25 30" stroke="#eceef0" stroke-width=".7"/><rect x="7.8" y="9.4" width="2.6" height="2.2" fill="#d6633c"/><rect x=".4" y="26.4" width="10.4" height="2.6" fill="#8d8458" opacity=".55"/></svg>
<div class="t c" style="left:746.4px;top:358.4px;font-size:5.6px">病害类型:</div>
<div class="t" style="left:784.6px;top:358.8px;font-size:5.75px;font-weight:700;letter-spacing:0">交安及沿线设</div>
<div class="t" style="left:784.6px;top:364.9px;font-size:5.75px;font-weight:700;letter-spacing:0">施-护栏（栏</div>
<div class="t" style="left:784.6px;top:370.9px;font-size:5.75px;font-weight:700;letter-spacing:0">杆）-护栏防阻</div>
<div class="t" style="left:784.6px;top:376.9px;font-size:5.75px;font-weight:700;letter-spacing:0">块缺损</div>
<div class="t c" style="left:746.4px;top:384.7px;font-size:5.6px">病害位置:</div>
<div class="t" style="left:784.6px;top:384.7px;font-size:5.5px;font-weight:700">路侧</div>
<div class="t c" style="left:746.4px;top:392.7px;font-size:5.6px">上报时间:</div>
<div class="t" style="left:784.6px;top:392.7px;font-size:5.6px">2019-12-18</div>
<div class="t" style="left:784.6px;top:398.9px;font-size:5.6px">13:19</div>
<div class="a" style="left:697.4px;top:407.8px;width:136.2px;height:61.0px;background:#393b41"></div>
<div class="t c" style="left:701.8px;top:412.0px;font-size:5.8px;letter-spacing:.05px">G40 K384+428 沪陕</div>
<div class="t" style="left:807.4px;top:412.0px;font-size:5.6px;color:#f47a20">待验收</div>
<svg style="left:702.8px;top:423.5px" width="39.8" height="30.0" viewBox="0 0 40 30" preserveAspectRatio="none"><defs><linearGradient id="sky423" x1="0" y1="0" x2="0" y2="1"><stop offset="0" stop-color="#f4f4f6"/><stop offset=".4" stop-color="#e2e3e6"/><stop offset="1" stop-color="#d0d2d6"/></linearGradient></defs><rect width="40" height="30" fill="url(#sky423)"/><path d="M22 1.5Q25 .4 28 1.6Q31 .2 34 1.4Q37 .4 40 1.2V8L20 9Z" fill="#b9b9ba" opacity=".85"/><path d="M13 9.2Q15 6.6 17 7.6Q19 7 20 8.6L22 9Z" fill="#8e8e8c"/><path d="M0 10.6L12.6 9.6L21 8.2L30 7.2L40 6.4V30H0Z" fill="#7f745d"/><path d="M24 9L40 7V16L30 14Z" fill="#8b7f66" opacity=".7"/><path d="M20 16L40 14V30H27Z" fill="#8a7c62" opacity=".6"/><path d="M0 10.4L12.4 9.8L21.6 30H0Z" fill="#6e7276"/><path d="M0 10.4L12.4 9.8L13 11L0 13Z" fill="#5f6368"/><path d="M12.4 9.8L14 10L25 30H17Z" fill="#59604e"/><path d="M0 17.2L7.2 12.6L7.9 12.9L0 19Z" fill="#dcdcde"/><path d="M12.9 10.6L14 10.6L26.4 30H23.4Z" fill="#c3c7cc"/><path d="M13.4 10.6L25 30" stroke="#eceef0" stroke-width=".7"/><rect x="7.8" y="9.4" width="2.6" height="2.2" fill="#d6633c"/><rect x=".4" y="26.4" width="10.4" height="2.6" fill="#8d8458" opacity=".55"/></svg>
<div class="t c" style="left:746.4px;top:424.4px;font-size:5.6px">病害类型:</div>
<div class="t" style="left:784.6px;top:424.8px;font-size:5.75px;font-weight:700;letter-spacing:0">交安及沿线设</div>
<div class="t" style="left:784.6px;top:430.9px;font-size:5.75px;font-weight:700;letter-spacing:0">施-护栏（栏</div>
<div class="t" style="left:784.6px;top:436.9px;font-size:5.75px;font-weight:700;letter-spacing:0">杆）-螺栓缺失</div>
<div class="t c" style="left:746.4px;top:444.7px;font-size:5.6px">病害位置:</div>
<div class="t" style="left:784.6px;top:444.7px;font-size:5.5px;font-weight:700">路侧</div>
<div class="t c" style="left:746.4px;top:452.7px;font-size:5.6px">上报时间:</div>
<div class="t" style="left:784.6px;top:452.7px;font-size:5.6px">2019-12-18</div>
<div class="t" style="left:784.6px;top:458.9px;font-size:5.6px">13:19</div>
<div class="a" style="left:697.4px;top:473.6px;width:136.2px;height:44.0px;background:#393b41"></div>
<div class="t c" style="left:701.8px;top:477.8px;font-size:5.8px;letter-spacing:.05px">G40 K384+428 沪陕</div>
<div class="t" style="left:807.4px;top:477.8px;font-size:5.6px;color:#f47a20">待验收</div>
<svg style="left:702.8px;top:489.3px" width="39.8" height="30.0" viewBox="0 0 40 30" preserveAspectRatio="none"><defs><linearGradient id="sky489" x1="0" y1="0" x2="0" y2="1"><stop offset="0" stop-color="#f4f4f6"/><stop offset=".4" stop-color="#e2e3e6"/><stop offset="1" stop-color="#d0d2d6"/></linearGradient></defs><rect width="40" height="30" fill="url(#sky489)"/><path d="M22 1.5Q25 .4 28 1.6Q31 .2 34 1.4Q37 .4 40 1.2V8L20 9Z" fill="#b9b9ba" opacity=".85"/><path d="M13 9.2Q15 6.6 17 7.6Q19 7 20 8.6L22 9Z" fill="#8e8e8c"/><path d="M0 10.6L12.6 9.6L21 8.2L30 7.2L40 6.4V30H0Z" fill="#7f745d"/><path d="M24 9L40 7V16L30 14Z" fill="#8b7f66" opacity=".7"/><path d="M20 16L40 14V30H27Z" fill="#8a7c62" opacity=".6"/><path d="M0 10.4L12.4 9.8L21.6 30H0Z" fill="#6e7276"/><path d="M0 10.4L12.4 9.8L13 11L0 13Z" fill="#5f6368"/><path d="M12.4 9.8L14 10L25 30H17Z" fill="#59604e"/><path d="M0 17.2L7.2 12.6L7.9 12.9L0 19Z" fill="#dcdcde"/><path d="M12.9 10.6L14 10.6L26.4 30H23.4Z" fill="#c3c7cc"/><path d="M13.4 10.6L25 30" stroke="#eceef0" stroke-width=".7"/><rect x="7.8" y="9.4" width="2.6" height="2.2" fill="#d6633c"/><rect x=".4" y="26.4" width="10.4" height="2.6" fill="#8d8458" opacity=".55"/></svg>
<div class="t c" style="left:746.4px;top:490.2px;font-size:5.6px">病害类型:</div>
<div class="t" style="left:784.6px;top:490.6px;font-size:5.75px;font-weight:700;letter-spacing:0">交安及沿线设</div>
<div class="t" style="left:784.6px;top:496.7px;font-size:5.75px;font-weight:700;letter-spacing:0">施-护栏（栏</div>
<div class="t" style="left:784.6px;top:502.7px;font-size:5.75px;font-weight:700;letter-spacing:0">杆）-防撞护栏</div>
<div class="t" style="left:784.6px;top:508.8px;font-size:5.75px;font-weight:700;letter-spacing:0">线形不顺</div>
<div class="t c" style="left:746.4px;top:516.5px;font-size:5.6px">病害位置:</div>
<div class="t" style="left:784.6px;top:516.5px;font-size:5.5px;font-weight:700">路侧</div>
<div class="t c" style="left:746.4px;top:524.5px;font-size:5.6px">上报时间:</div>
<div class="t" style="left:784.6px;top:524.5px;font-size:5.6px">2019-12-18</div>
<div class="t" style="left:784.6px;top:530.7px;font-size:5.6px">13:19</div>
<div class="a" style="left:833.4px;top:233.6px;width:2.3px;height:184px;background:#3eaac2"></div>
<div class="a" style="left:834.2px;top:417.6px;width:.9px;height:100px;background:#2a7686"></div>
<svg style="left:836px;top:238.6px" width="16" height="16" viewBox="-8 -8 16 16"><circle r="7.6" fill="#1d1d20"/><g fill="#fff"><rect x="-1.1" y="-4.6" width="2.2" height="2.2"/><rect x="-4.6" y="1.8" width="2.2" height="2.2"/><rect x="-1.1" y="1.8" width="2.2" height="2.2"/><rect x="2.4" y="1.8" width="2.2" height="2.2"/></g><path d="M0 -2.4V2M-3.5 2V-.2H3.5V2" fill="none" stroke="#fff" stroke-width=".8"/></svg>
<div class="a" style="left:835.5px;top:260.4px;width:138.1px;height:9px;background:linear-gradient(#3d3f45,#35373d)"></div>
<div class="a" style="left:840.6px;top:262.8px;width:4.4px;height:4.4px;border-radius:50%;background:#3fae5c"></div>
<div class="t c" style="left:854px;top:262.1px;font-size:5.6px">任务接收</div>
<div class="t c" style="left:891.6px;top:262.1px;font-size:5.6px">13:19</div>
<div class="a" style="left:835.5px;top:270.5px;width:138.1px;height:9px;background:linear-gradient(#3d3f45,#35373d)"></div>
<div class="a" style="left:840.6px;top:272.9px;width:4.4px;height:4.4px;border-radius:50%;background:#3fae5c"></div>
<div class="t c" style="left:854px;top:272.2px;font-size:5.6px">施工进场</div>
<div class="t c" style="left:891.6px;top:272.2px;font-size:5.6px">13:19</div>
<div class="a" style="left:835.5px;top:280.7px;width:138.1px;height:9px;background:linear-gradient(#3d3f45,#35373d)"></div>
<div class="a" style="left:840.6px;top:283.1px;width:4.4px;height:4.4px;border-radius:50%;background:#3fae5c"></div>
<div class="t c" style="left:854px;top:282.4px;font-size:5.6px">施工进场</div>
<div class="t c" style="left:891.6px;top:282.4px;font-size:5.6px">17:14</div>
<div class="a" style="left:835.5px;top:290.8px;width:138.1px;height:9px;background:linear-gradient(#3d3f45,#35373d)"></div>
<div class="a" style="left:840.6px;top:293.2px;width:4.4px;height:4.4px;border-radius:50%;background:#3fae5c"></div>
<div class="t c" style="left:854px;top:292.5px;font-size:5.6px">施工进场</div>
<div class="t c" style="left:891.6px;top:292.5px;font-size:5.6px">17:14</div>
<div class="a" style="left:835.5px;top:300.9px;width:138.1px;height:9px;background:linear-gradient(#3d3f45,#35373d)"></div>
<div class="a" style="left:840.6px;top:303.3px;width:4.4px;height:4.4px;border-radius:50%;background:#3fae5c"></div>
<div class="t c" style="left:854px;top:302.6px;font-size:5.6px">施工进场</div>
<div class="t c" style="left:891.6px;top:302.6px;font-size:5.6px">17:15</div>
<div class="a" style="left:835.5px;top:311.0px;width:138.1px;height:9px;background:linear-gradient(#3d3f45,#35373d)"></div>
<div class="a" style="left:840.6px;top:313.4px;width:4.4px;height:4.4px;border-radius:50%;background:#3fae5c"></div>
<div class="t c" style="left:854px;top:312.8px;font-size:5.6px">施工进场</div>
<div class="t c" style="left:891.6px;top:312.8px;font-size:5.6px">17:16</div>
<div class="a" style="left:835.5px;top:321.2px;width:138.1px;height:9px;background:linear-gradient(#3d3f45,#35373d)"></div>
<div class="a" style="left:840.6px;top:323.6px;width:4.4px;height:4.4px;border-radius:50%;background:#3fae5c"></div>
<div class="t c" style="left:854px;top:322.9px;font-size:5.6px">施工进场</div>
<div class="t c" style="left:891.6px;top:322.9px;font-size:5.6px">17:16</div>
<div class="a" style="left:835.5px;top:331.3px;width:138.1px;height:9px;background:linear-gradient(#3d3f45,#35373d)"></div>
<div class="a" style="left:840.6px;top:333.7px;width:4.4px;height:4.4px;border-radius:50%;background:#3fae5c"></div>
<div class="t c" style="left:854px;top:333.0px;font-size:5.6px">申请验收</div>
<div class="t c" style="left:891.6px;top:333.0px;font-size:5.6px">17:17</div>
<div class="a" style="left:835.5px;top:341.4px;width:138.1px;height:9px;background:linear-gradient(#3d3f45,#35373d)"></div>
<div class="a" style="left:840.6px;top:343.8px;width:4.4px;height:4.4px;border-radius:50%;background:#3fae5c"></div>
<div class="t c" style="left:854px;top:343.1px;font-size:5.6px">随机抽检</div>
<div class="t c" style="left:891.6px;top:343.1px;font-size:5.6px">17:17</div>
<div class="a" style="left:89px;top:517.9px;width:884.6px;height:1.3px;background:#ececec"></div>
<div class="a" style="left:89.6px;top:519.2px;width:884px;height:10.8px;background:#37373d"></div>
<div class="a" style="left:89.6px;top:519.2px;width:2.2px;height:10.8px;background:linear-gradient(90deg,#e8e8ec,#6a6a72)"></div>
<div class="t" style="left:778.4px;top:474.6px;font-size:51.4px;font-weight:900;color:rgba(172,172,172,.37);letter-spacing:.9px;font-family:'Liberation Sans','Noto Sans CJK SC',sans-serif">感动科技</div>
<svg style="left:703px;top:470.2px" width="52" height="60" viewBox="0 0 52 60"><path d="M26 1A25 28.5 0 1 1 25.9 1ZM25 6.6A19.2 22.6 0 1 0 25.1 6.6Z" fill="rgba(172,172,172,.37)" fill-rule="evenodd"/><path d="M7 43Q14 20 36 14Q27 24 24 47Q16 37 7 43Z" fill="rgba(172,172,172,.3)"/></svg>
</div></body></html>
